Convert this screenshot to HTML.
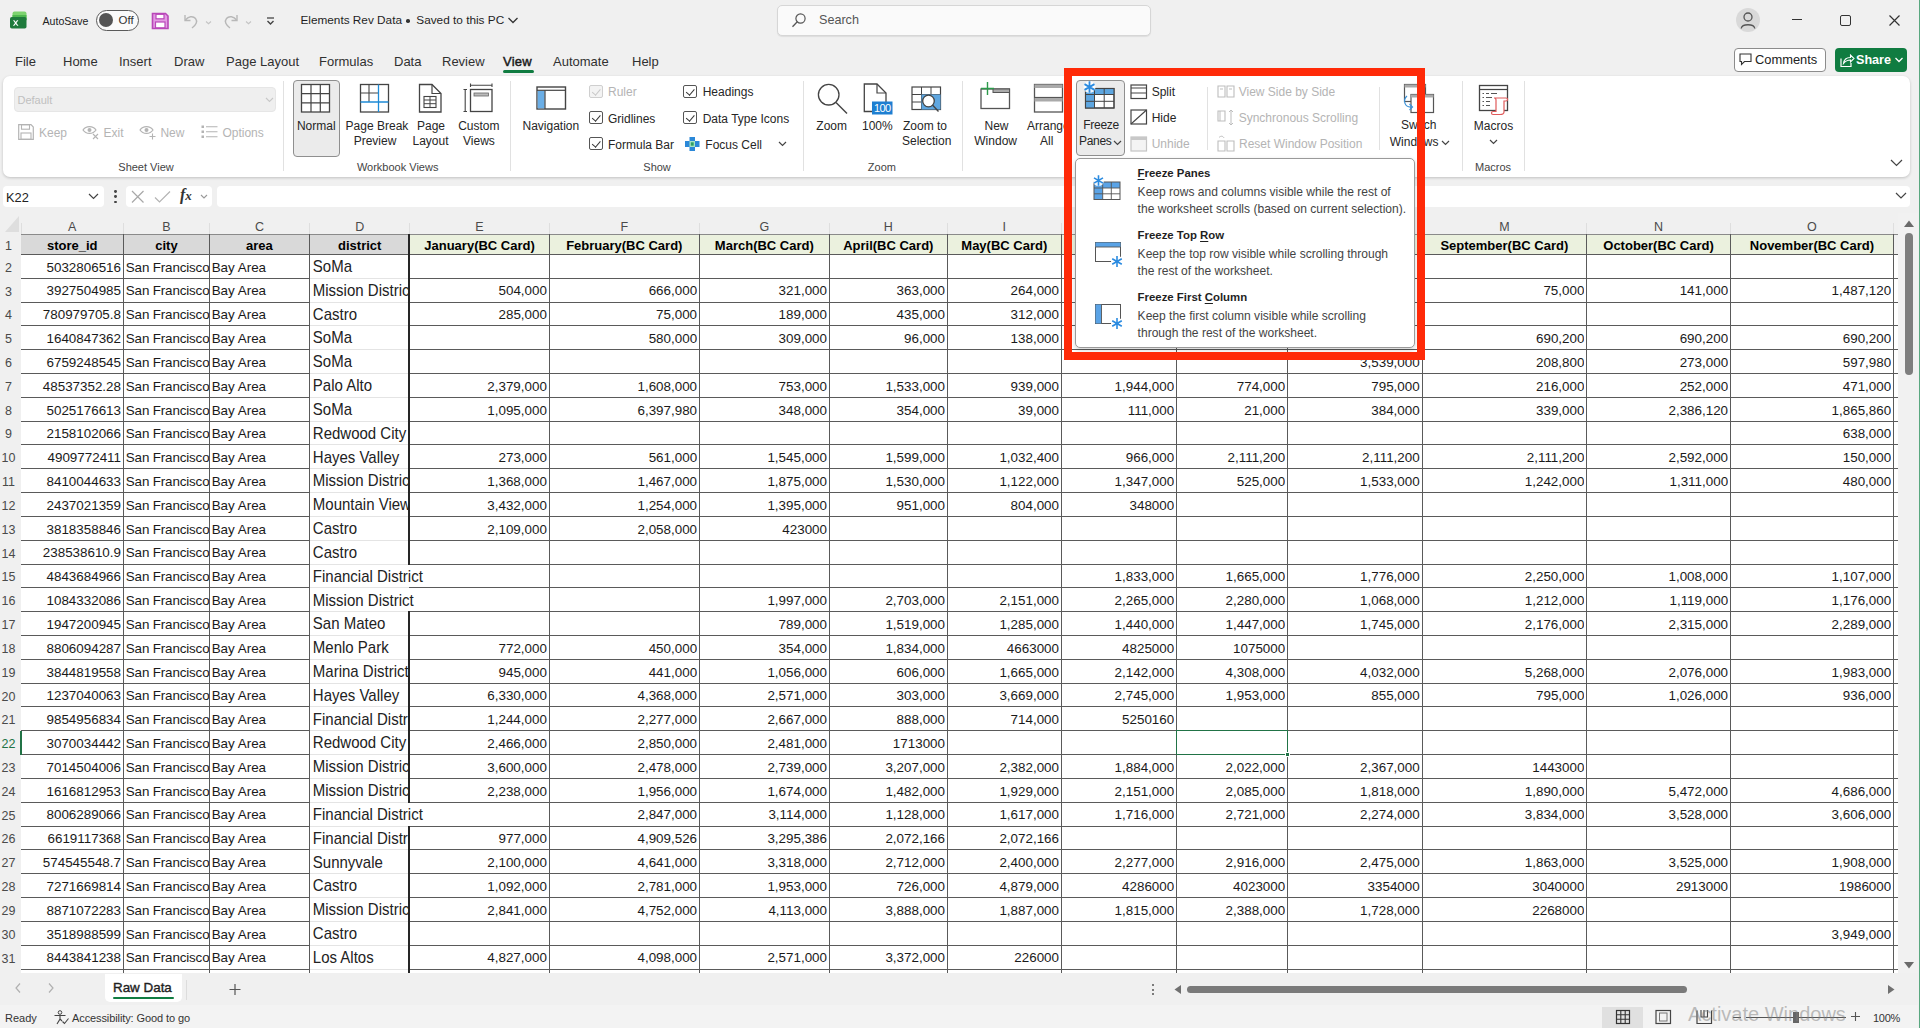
<!DOCTYPE html><html><head><meta charset="utf-8"><style>
*{margin:0;padding:0;box-sizing:border-box}
html,body{width:1920px;height:1028px;overflow:hidden;background:#f0f0f0;font-family:"Liberation Sans", sans-serif;color:#262626}
.a{position:absolute}
.c{position:absolute;white-space:nowrap;overflow:hidden;color:#1a1a1a;line-height:1}
.rn{position:absolute;left:0;width:17px;text-align:center;font-size:12.5px;color:#4a4a4a;line-height:1}
.ch{position:absolute;top:220.5px;text-align:center;font-size:12.5px;color:#4a4a4a;line-height:1}
.t12{font-size:12px;line-height:1;white-space:nowrap}
.mt{top:54.6px;font-size:13px;line-height:1;color:#303030;white-space:nowrap}
.rb{position:absolute;font-size:12px;line-height:1;white-space:nowrap;color:#262626}
.gl{position:absolute;font-size:11px;line-height:1;white-space:nowrap;color:#444;top:162px}
.dis{color:#b4b4b4}
.pt{position:absolute;left:1137.6px;font-size:11.4px;font-weight:bold;line-height:1;color:#1f1f1f;white-space:nowrap}
.pt u{text-decoration-thickness:1px;text-underline-offset:1.5px}
.pd{position:absolute;left:1137.6px;font-size:12.05px;line-height:1;color:#444;white-space:nowrap}
.cb{width:13.5px;height:13px;border:1px solid #555;border-radius:2px;background:#fff}
.cb::after{content:'';position:absolute;left:3.5px;top:1.2px;width:3.5px;height:6.5px;border-right:1.2px solid #333;border-bottom:1.2px solid #333;transform:rotate(40deg)}
.dcb{border-color:#cfcfcf;background:#f3f3f3}
.dcb::after{border-color:#c8c8c8}
</style></head><body>
<div style="position:absolute;left:21px;top:234.5px;width:388.9px;height:19.900000000000006px;background:#d9d9d9"></div>
<div style="position:absolute;left:409.9px;top:234.5px;width:1483.6px;height:19.900000000000006px;background:#ebf1de"></div>
<div style="position:absolute;left:21px;top:254.4px;width:1877px;height:718.6px;background:#fff"></div>
<div style="position:absolute;left:21px;top:234px;width:1877px;height:1px;background:#8a8a8a"></div>
<div style="position:absolute;left:21px;top:254px;width:288px;height:1px;background:#5a5a5a"></div>
<div style="position:absolute;left:309px;top:254px;width:100px;height:1px;background:#5a5a5a"></div>
<div style="position:absolute;left:409px;top:254px;width:1489px;height:1px;background:#5a5a5a"></div>
<div style="position:absolute;left:21px;top:278px;width:288px;height:1px;background:#5a5a5a"></div>
<div style="position:absolute;left:309px;top:278px;width:100px;height:1px;background:#e4e4e4"></div>
<div style="position:absolute;left:409px;top:278px;width:1489px;height:1px;background:#5a5a5a"></div>
<div style="position:absolute;left:21px;top:302px;width:288px;height:1px;background:#5a5a5a"></div>
<div style="position:absolute;left:309px;top:302px;width:100px;height:1px;background:#e4e4e4"></div>
<div style="position:absolute;left:409px;top:302px;width:1489px;height:1px;background:#5a5a5a"></div>
<div style="position:absolute;left:21px;top:325px;width:288px;height:1px;background:#5a5a5a"></div>
<div style="position:absolute;left:309px;top:325px;width:100px;height:1px;background:#e4e4e4"></div>
<div style="position:absolute;left:409px;top:325px;width:1489px;height:1px;background:#5a5a5a"></div>
<div style="position:absolute;left:21px;top:349px;width:288px;height:1px;background:#5a5a5a"></div>
<div style="position:absolute;left:309px;top:349px;width:100px;height:1px;background:#e4e4e4"></div>
<div style="position:absolute;left:409px;top:349px;width:1489px;height:1px;background:#5a5a5a"></div>
<div style="position:absolute;left:21px;top:373px;width:288px;height:1px;background:#5a5a5a"></div>
<div style="position:absolute;left:309px;top:373px;width:100px;height:1px;background:#e4e4e4"></div>
<div style="position:absolute;left:409px;top:373px;width:1489px;height:1px;background:#5a5a5a"></div>
<div style="position:absolute;left:21px;top:397px;width:288px;height:1px;background:#5a5a5a"></div>
<div style="position:absolute;left:309px;top:397px;width:100px;height:1px;background:#e4e4e4"></div>
<div style="position:absolute;left:409px;top:397px;width:1489px;height:1px;background:#5a5a5a"></div>
<div style="position:absolute;left:21px;top:421px;width:288px;height:1px;background:#5a5a5a"></div>
<div style="position:absolute;left:309px;top:421px;width:100px;height:1px;background:#e4e4e4"></div>
<div style="position:absolute;left:409px;top:421px;width:1489px;height:1px;background:#5a5a5a"></div>
<div style="position:absolute;left:21px;top:444px;width:288px;height:1px;background:#5a5a5a"></div>
<div style="position:absolute;left:309px;top:444px;width:100px;height:1px;background:#e4e4e4"></div>
<div style="position:absolute;left:409px;top:444px;width:1489px;height:1px;background:#5a5a5a"></div>
<div style="position:absolute;left:21px;top:468px;width:288px;height:1px;background:#5a5a5a"></div>
<div style="position:absolute;left:309px;top:468px;width:100px;height:1px;background:#e4e4e4"></div>
<div style="position:absolute;left:409px;top:468px;width:1489px;height:1px;background:#5a5a5a"></div>
<div style="position:absolute;left:21px;top:492px;width:288px;height:1px;background:#5a5a5a"></div>
<div style="position:absolute;left:309px;top:492px;width:100px;height:1px;background:#e4e4e4"></div>
<div style="position:absolute;left:409px;top:492px;width:1489px;height:1px;background:#5a5a5a"></div>
<div style="position:absolute;left:21px;top:516px;width:288px;height:1px;background:#5a5a5a"></div>
<div style="position:absolute;left:309px;top:516px;width:100px;height:1px;background:#e4e4e4"></div>
<div style="position:absolute;left:409px;top:516px;width:1489px;height:1px;background:#5a5a5a"></div>
<div style="position:absolute;left:21px;top:540px;width:288px;height:1px;background:#5a5a5a"></div>
<div style="position:absolute;left:309px;top:540px;width:100px;height:1px;background:#e4e4e4"></div>
<div style="position:absolute;left:409px;top:540px;width:1489px;height:1px;background:#5a5a5a"></div>
<div style="position:absolute;left:21px;top:564px;width:288px;height:1px;background:#5a5a5a"></div>
<div style="position:absolute;left:309px;top:564px;width:100px;height:1px;background:#e4e4e4"></div>
<div style="position:absolute;left:409px;top:564px;width:1489px;height:1px;background:#5a5a5a"></div>
<div style="position:absolute;left:21px;top:587px;width:288px;height:1px;background:#5a5a5a"></div>
<div style="position:absolute;left:309px;top:587px;width:100px;height:1px;background:#e4e4e4"></div>
<div style="position:absolute;left:409px;top:587px;width:1489px;height:1px;background:#5a5a5a"></div>
<div style="position:absolute;left:21px;top:611px;width:288px;height:1px;background:#5a5a5a"></div>
<div style="position:absolute;left:309px;top:611px;width:100px;height:1px;background:#e4e4e4"></div>
<div style="position:absolute;left:409px;top:611px;width:1489px;height:1px;background:#5a5a5a"></div>
<div style="position:absolute;left:21px;top:635px;width:288px;height:1px;background:#5a5a5a"></div>
<div style="position:absolute;left:309px;top:635px;width:100px;height:1px;background:#e4e4e4"></div>
<div style="position:absolute;left:409px;top:635px;width:1489px;height:1px;background:#5a5a5a"></div>
<div style="position:absolute;left:21px;top:659px;width:288px;height:1px;background:#5a5a5a"></div>
<div style="position:absolute;left:309px;top:659px;width:100px;height:1px;background:#e4e4e4"></div>
<div style="position:absolute;left:409px;top:659px;width:1489px;height:1px;background:#5a5a5a"></div>
<div style="position:absolute;left:21px;top:683px;width:288px;height:1px;background:#5a5a5a"></div>
<div style="position:absolute;left:309px;top:683px;width:100px;height:1px;background:#e4e4e4"></div>
<div style="position:absolute;left:409px;top:683px;width:1489px;height:1px;background:#5a5a5a"></div>
<div style="position:absolute;left:21px;top:706px;width:288px;height:1px;background:#5a5a5a"></div>
<div style="position:absolute;left:309px;top:706px;width:100px;height:1px;background:#e4e4e4"></div>
<div style="position:absolute;left:409px;top:706px;width:1489px;height:1px;background:#5a5a5a"></div>
<div style="position:absolute;left:21px;top:730px;width:288px;height:1px;background:#5a5a5a"></div>
<div style="position:absolute;left:309px;top:730px;width:100px;height:1px;background:#e4e4e4"></div>
<div style="position:absolute;left:409px;top:730px;width:1489px;height:1px;background:#5a5a5a"></div>
<div style="position:absolute;left:21px;top:754px;width:288px;height:1px;background:#5a5a5a"></div>
<div style="position:absolute;left:309px;top:754px;width:100px;height:1px;background:#e4e4e4"></div>
<div style="position:absolute;left:409px;top:754px;width:1489px;height:1px;background:#5a5a5a"></div>
<div style="position:absolute;left:21px;top:778px;width:288px;height:1px;background:#5a5a5a"></div>
<div style="position:absolute;left:309px;top:778px;width:100px;height:1px;background:#e4e4e4"></div>
<div style="position:absolute;left:409px;top:778px;width:1489px;height:1px;background:#5a5a5a"></div>
<div style="position:absolute;left:21px;top:802px;width:288px;height:1px;background:#5a5a5a"></div>
<div style="position:absolute;left:309px;top:802px;width:100px;height:1px;background:#e4e4e4"></div>
<div style="position:absolute;left:409px;top:802px;width:1489px;height:1px;background:#5a5a5a"></div>
<div style="position:absolute;left:21px;top:826px;width:288px;height:1px;background:#5a5a5a"></div>
<div style="position:absolute;left:309px;top:826px;width:100px;height:1px;background:#e4e4e4"></div>
<div style="position:absolute;left:409px;top:826px;width:1489px;height:1px;background:#5a5a5a"></div>
<div style="position:absolute;left:21px;top:849px;width:288px;height:1px;background:#5a5a5a"></div>
<div style="position:absolute;left:309px;top:849px;width:100px;height:1px;background:#e4e4e4"></div>
<div style="position:absolute;left:409px;top:849px;width:1489px;height:1px;background:#5a5a5a"></div>
<div style="position:absolute;left:21px;top:873px;width:288px;height:1px;background:#5a5a5a"></div>
<div style="position:absolute;left:309px;top:873px;width:100px;height:1px;background:#e4e4e4"></div>
<div style="position:absolute;left:409px;top:873px;width:1489px;height:1px;background:#5a5a5a"></div>
<div style="position:absolute;left:21px;top:897px;width:288px;height:1px;background:#5a5a5a"></div>
<div style="position:absolute;left:309px;top:897px;width:100px;height:1px;background:#e4e4e4"></div>
<div style="position:absolute;left:409px;top:897px;width:1489px;height:1px;background:#5a5a5a"></div>
<div style="position:absolute;left:21px;top:921px;width:288px;height:1px;background:#5a5a5a"></div>
<div style="position:absolute;left:309px;top:921px;width:100px;height:1px;background:#e4e4e4"></div>
<div style="position:absolute;left:409px;top:921px;width:1489px;height:1px;background:#5a5a5a"></div>
<div style="position:absolute;left:21px;top:945px;width:288px;height:1px;background:#5a5a5a"></div>
<div style="position:absolute;left:309px;top:945px;width:100px;height:1px;background:#e4e4e4"></div>
<div style="position:absolute;left:409px;top:945px;width:1489px;height:1px;background:#5a5a5a"></div>
<div style="position:absolute;left:21px;top:969px;width:288px;height:1px;background:#5a5a5a"></div>
<div style="position:absolute;left:309px;top:969px;width:100px;height:1px;background:#e4e4e4"></div>
<div style="position:absolute;left:409px;top:969px;width:1489px;height:1px;background:#5a5a5a"></div>
<div style="position:absolute;left:123px;top:234px;width:1px;height:739px;background:#5a5a5a"></div>
<div style="position:absolute;left:209px;top:234px;width:1px;height:739px;background:#5a5a5a"></div>
<div style="position:absolute;left:309px;top:234px;width:1px;height:739px;background:#5a5a5a"></div>
<div style="position:absolute;left:408px;top:234px;width:2px;height:331px;background:#262626"></div>
<div style="position:absolute;left:408px;top:611px;width:2px;height:192px;background:#262626"></div>
<div style="position:absolute;left:408px;top:826px;width:2px;height:147px;background:#262626"></div>
<div style="position:absolute;left:549px;top:234px;width:1px;height:739px;background:#5a5a5a"></div>
<div style="position:absolute;left:699px;top:234px;width:1px;height:739px;background:#5a5a5a"></div>
<div style="position:absolute;left:829px;top:234px;width:1px;height:739px;background:#5a5a5a"></div>
<div style="position:absolute;left:947px;top:234px;width:1px;height:739px;background:#5a5a5a"></div>
<div style="position:absolute;left:1061px;top:234px;width:1px;height:739px;background:#5a5a5a"></div>
<div style="position:absolute;left:1176px;top:234px;width:1px;height:739px;background:#5a5a5a"></div>
<div style="position:absolute;left:1287px;top:234px;width:1px;height:739px;background:#5a5a5a"></div>
<div style="position:absolute;left:1422px;top:234px;width:1px;height:739px;background:#5a5a5a"></div>
<div style="position:absolute;left:1586px;top:234px;width:1px;height:739px;background:#5a5a5a"></div>
<div style="position:absolute;left:1730px;top:234px;width:1px;height:739px;background:#5a5a5a"></div>
<div style="position:absolute;left:1893px;top:234px;width:1px;height:739px;background:#5a5a5a"></div>
<div class="c" style="left:21.0px;top:238.90px;width:102.5px;height:16.2px;font-size:13px;text-align:center;font-weight:bold;color:#000">store_id</div>
<div class="c" style="left:123.5px;top:238.90px;width:85.9px;height:16.2px;font-size:13px;text-align:center;font-weight:bold;color:#000">city</div>
<div class="c" style="left:209.4px;top:238.90px;width:100.1px;height:16.2px;font-size:13px;text-align:center;font-weight:bold;color:#000">area</div>
<div class="c" style="left:309.5px;top:238.90px;width:100.4px;height:16.2px;font-size:13px;text-align:center;font-weight:bold;color:#000">district</div>
<div class="c" style="left:409.9px;top:238.90px;width:139.3px;height:16.2px;font-size:13px;text-align:center;font-weight:bold;color:#000">January(BC Card)</div>
<div class="c" style="left:549.2px;top:238.90px;width:150.2px;height:16.2px;font-size:13px;text-align:center;font-weight:bold;color:#000">February(BC Card)</div>
<div class="c" style="left:699.4px;top:238.90px;width:129.9px;height:16.2px;font-size:13px;text-align:center;font-weight:bold;color:#000">March(BC Card)</div>
<div class="c" style="left:829.3px;top:238.90px;width:118.0px;height:16.2px;font-size:13px;text-align:center;font-weight:bold;color:#000">April(BC Card)</div>
<div class="c" style="left:947.3px;top:238.90px;width:114.0px;height:16.2px;font-size:13px;text-align:center;font-weight:bold;color:#000">May(BC Card)</div>
<div class="c" style="left:1422.0px;top:238.90px;width:164.7px;height:16.2px;font-size:13px;text-align:center;font-weight:bold;color:#000">September(BC Card)</div>
<div class="c" style="left:1586.7px;top:238.90px;width:143.7px;height:16.2px;font-size:13px;text-align:center;font-weight:bold;color:#000">October(BC Card)</div>
<div class="c" style="left:1730.4px;top:238.90px;width:163.1px;height:16.2px;font-size:13px;text-align:center;font-weight:bold;color:#000">November(BC Card)</div>
<div class="c" style="left:21.0px;top:260.58px;width:100.0px;height:16.8px;font-size:13.4px;text-align:right;">5032806516</div>
<div class="c" style="left:125.8px;top:260.58px;width:83.6px;height:16.8px;font-size:13.4px;text-align:left;letter-spacing:-0.15px">San Francisco</div>
<div class="c" style="left:211.7px;top:260.58px;width:97.8px;height:16.8px;font-size:13.4px;text-align:left;">Bay Area</div>
<div class="c" style="left:312.8px;top:259.02px;width:96.4px;height:18.8px;font-size:15px;text-align:left;transform:scaleY(1.12);transform-origin:0 80%;color:#222">SoMa</div>
<div class="c" style="left:21.0px;top:284.40px;width:100.0px;height:16.8px;font-size:13.4px;text-align:right;">3927504985</div>
<div class="c" style="left:125.8px;top:284.40px;width:83.6px;height:16.8px;font-size:13.4px;text-align:left;letter-spacing:-0.15px">San Francisco</div>
<div class="c" style="left:211.7px;top:284.40px;width:97.8px;height:16.8px;font-size:13.4px;text-align:left;">Bay Area</div>
<div class="c" style="left:312.8px;top:282.84px;width:96.4px;height:18.8px;font-size:15px;text-align:left;transform:scaleY(1.12);transform-origin:0 80%;color:#222">Mission District</div>
<div class="c" style="left:409.9px;top:284.40px;width:137.0px;height:16.8px;font-size:13.4px;text-align:right;">504,000</div>
<div class="c" style="left:549.2px;top:284.40px;width:147.9px;height:16.8px;font-size:13.4px;text-align:right;">666,000</div>
<div class="c" style="left:699.4px;top:284.40px;width:127.6px;height:16.8px;font-size:13.4px;text-align:right;">321,000</div>
<div class="c" style="left:829.3px;top:284.40px;width:115.7px;height:16.8px;font-size:13.4px;text-align:right;">363,000</div>
<div class="c" style="left:947.3px;top:284.40px;width:111.7px;height:16.8px;font-size:13.4px;text-align:right;">264,000</div>
<div class="c" style="left:1422.0px;top:284.40px;width:162.4px;height:16.8px;font-size:13.4px;text-align:right;">75,000</div>
<div class="c" style="left:1586.7px;top:284.40px;width:141.4px;height:16.8px;font-size:13.4px;text-align:right;">141,000</div>
<div class="c" style="left:1730.4px;top:284.40px;width:160.8px;height:16.8px;font-size:13.4px;text-align:right;">1,487,120</div>
<div class="c" style="left:21.0px;top:308.22px;width:100.0px;height:16.8px;font-size:13.4px;text-align:right;">780979705.8</div>
<div class="c" style="left:125.8px;top:308.22px;width:83.6px;height:16.8px;font-size:13.4px;text-align:left;letter-spacing:-0.15px">San Francisco</div>
<div class="c" style="left:211.7px;top:308.22px;width:97.8px;height:16.8px;font-size:13.4px;text-align:left;">Bay Area</div>
<div class="c" style="left:312.8px;top:306.66px;width:96.4px;height:18.8px;font-size:15px;text-align:left;transform:scaleY(1.12);transform-origin:0 80%;color:#222">Castro</div>
<div class="c" style="left:409.9px;top:308.22px;width:137.0px;height:16.8px;font-size:13.4px;text-align:right;">285,000</div>
<div class="c" style="left:549.2px;top:308.22px;width:147.9px;height:16.8px;font-size:13.4px;text-align:right;">75,000</div>
<div class="c" style="left:699.4px;top:308.22px;width:127.6px;height:16.8px;font-size:13.4px;text-align:right;">189,000</div>
<div class="c" style="left:829.3px;top:308.22px;width:115.7px;height:16.8px;font-size:13.4px;text-align:right;">435,000</div>
<div class="c" style="left:947.3px;top:308.22px;width:111.7px;height:16.8px;font-size:13.4px;text-align:right;">312,000</div>
<div class="c" style="left:21.0px;top:332.04px;width:100.0px;height:16.8px;font-size:13.4px;text-align:right;">1640847362</div>
<div class="c" style="left:125.8px;top:332.04px;width:83.6px;height:16.8px;font-size:13.4px;text-align:left;letter-spacing:-0.15px">San Francisco</div>
<div class="c" style="left:211.7px;top:332.04px;width:97.8px;height:16.8px;font-size:13.4px;text-align:left;">Bay Area</div>
<div class="c" style="left:312.8px;top:330.48px;width:96.4px;height:18.8px;font-size:15px;text-align:left;transform:scaleY(1.12);transform-origin:0 80%;color:#222">SoMa</div>
<div class="c" style="left:549.2px;top:332.04px;width:147.9px;height:16.8px;font-size:13.4px;text-align:right;">580,000</div>
<div class="c" style="left:699.4px;top:332.04px;width:127.6px;height:16.8px;font-size:13.4px;text-align:right;">309,000</div>
<div class="c" style="left:829.3px;top:332.04px;width:115.7px;height:16.8px;font-size:13.4px;text-align:right;">96,000</div>
<div class="c" style="left:947.3px;top:332.04px;width:111.7px;height:16.8px;font-size:13.4px;text-align:right;">138,000</div>
<div class="c" style="left:1422.0px;top:332.04px;width:162.4px;height:16.8px;font-size:13.4px;text-align:right;">690,200</div>
<div class="c" style="left:1586.7px;top:332.04px;width:141.4px;height:16.8px;font-size:13.4px;text-align:right;">690,200</div>
<div class="c" style="left:1730.4px;top:332.04px;width:160.8px;height:16.8px;font-size:13.4px;text-align:right;">690,200</div>
<div class="c" style="left:21.0px;top:355.86px;width:100.0px;height:16.8px;font-size:13.4px;text-align:right;">6759248545</div>
<div class="c" style="left:125.8px;top:355.86px;width:83.6px;height:16.8px;font-size:13.4px;text-align:left;letter-spacing:-0.15px">San Francisco</div>
<div class="c" style="left:211.7px;top:355.86px;width:97.8px;height:16.8px;font-size:13.4px;text-align:left;">Bay Area</div>
<div class="c" style="left:312.8px;top:354.30px;width:96.4px;height:18.8px;font-size:15px;text-align:left;transform:scaleY(1.12);transform-origin:0 80%;color:#222">SoMa</div>
<div class="c" style="left:1287.5px;top:355.86px;width:132.2px;height:16.8px;font-size:13.4px;text-align:right;">3,539,000</div>
<div class="c" style="left:1422.0px;top:355.86px;width:162.4px;height:16.8px;font-size:13.4px;text-align:right;">208,800</div>
<div class="c" style="left:1586.7px;top:355.86px;width:141.4px;height:16.8px;font-size:13.4px;text-align:right;">273,000</div>
<div class="c" style="left:1730.4px;top:355.86px;width:160.8px;height:16.8px;font-size:13.4px;text-align:right;">597,980</div>
<div class="c" style="left:21.0px;top:379.68px;width:100.0px;height:16.8px;font-size:13.4px;text-align:right;">48537352.28</div>
<div class="c" style="left:125.8px;top:379.68px;width:83.6px;height:16.8px;font-size:13.4px;text-align:left;letter-spacing:-0.15px">San Francisco</div>
<div class="c" style="left:211.7px;top:379.68px;width:97.8px;height:16.8px;font-size:13.4px;text-align:left;">Bay Area</div>
<div class="c" style="left:312.8px;top:378.12px;width:96.4px;height:18.8px;font-size:15px;text-align:left;transform:scaleY(1.12);transform-origin:0 80%;color:#222">Palo Alto</div>
<div class="c" style="left:409.9px;top:379.68px;width:137.0px;height:16.8px;font-size:13.4px;text-align:right;">2,379,000</div>
<div class="c" style="left:549.2px;top:379.68px;width:147.9px;height:16.8px;font-size:13.4px;text-align:right;">1,608,000</div>
<div class="c" style="left:699.4px;top:379.68px;width:127.6px;height:16.8px;font-size:13.4px;text-align:right;">753,000</div>
<div class="c" style="left:829.3px;top:379.68px;width:115.7px;height:16.8px;font-size:13.4px;text-align:right;">1,533,000</div>
<div class="c" style="left:947.3px;top:379.68px;width:111.7px;height:16.8px;font-size:13.4px;text-align:right;">939,000</div>
<div class="c" style="left:1061.3px;top:379.68px;width:112.9px;height:16.8px;font-size:13.4px;text-align:right;">1,944,000</div>
<div class="c" style="left:1176.5px;top:379.68px;width:108.7px;height:16.8px;font-size:13.4px;text-align:right;">774,000</div>
<div class="c" style="left:1287.5px;top:379.68px;width:132.2px;height:16.8px;font-size:13.4px;text-align:right;">795,000</div>
<div class="c" style="left:1422.0px;top:379.68px;width:162.4px;height:16.8px;font-size:13.4px;text-align:right;">216,000</div>
<div class="c" style="left:1586.7px;top:379.68px;width:141.4px;height:16.8px;font-size:13.4px;text-align:right;">252,000</div>
<div class="c" style="left:1730.4px;top:379.68px;width:160.8px;height:16.8px;font-size:13.4px;text-align:right;">471,000</div>
<div class="c" style="left:21.0px;top:403.50px;width:100.0px;height:16.8px;font-size:13.4px;text-align:right;">5025176613</div>
<div class="c" style="left:125.8px;top:403.50px;width:83.6px;height:16.8px;font-size:13.4px;text-align:left;letter-spacing:-0.15px">San Francisco</div>
<div class="c" style="left:211.7px;top:403.50px;width:97.8px;height:16.8px;font-size:13.4px;text-align:left;">Bay Area</div>
<div class="c" style="left:312.8px;top:401.94px;width:96.4px;height:18.8px;font-size:15px;text-align:left;transform:scaleY(1.12);transform-origin:0 80%;color:#222">SoMa</div>
<div class="c" style="left:409.9px;top:403.50px;width:137.0px;height:16.8px;font-size:13.4px;text-align:right;">1,095,000</div>
<div class="c" style="left:549.2px;top:403.50px;width:147.9px;height:16.8px;font-size:13.4px;text-align:right;">6,397,980</div>
<div class="c" style="left:699.4px;top:403.50px;width:127.6px;height:16.8px;font-size:13.4px;text-align:right;">348,000</div>
<div class="c" style="left:829.3px;top:403.50px;width:115.7px;height:16.8px;font-size:13.4px;text-align:right;">354,000</div>
<div class="c" style="left:947.3px;top:403.50px;width:111.7px;height:16.8px;font-size:13.4px;text-align:right;">39,000</div>
<div class="c" style="left:1061.3px;top:403.50px;width:112.9px;height:16.8px;font-size:13.4px;text-align:right;">111,000</div>
<div class="c" style="left:1176.5px;top:403.50px;width:108.7px;height:16.8px;font-size:13.4px;text-align:right;">21,000</div>
<div class="c" style="left:1287.5px;top:403.50px;width:132.2px;height:16.8px;font-size:13.4px;text-align:right;">384,000</div>
<div class="c" style="left:1422.0px;top:403.50px;width:162.4px;height:16.8px;font-size:13.4px;text-align:right;">339,000</div>
<div class="c" style="left:1586.7px;top:403.50px;width:141.4px;height:16.8px;font-size:13.4px;text-align:right;">2,386,120</div>
<div class="c" style="left:1730.4px;top:403.50px;width:160.8px;height:16.8px;font-size:13.4px;text-align:right;">1,865,860</div>
<div class="c" style="left:21.0px;top:427.32px;width:100.0px;height:16.8px;font-size:13.4px;text-align:right;">2158102066</div>
<div class="c" style="left:125.8px;top:427.32px;width:83.6px;height:16.8px;font-size:13.4px;text-align:left;letter-spacing:-0.15px">San Francisco</div>
<div class="c" style="left:211.7px;top:427.32px;width:97.8px;height:16.8px;font-size:13.4px;text-align:left;">Bay Area</div>
<div class="c" style="left:312.8px;top:425.76px;width:96.4px;height:18.8px;font-size:15px;text-align:left;transform:scaleY(1.12);transform-origin:0 80%;color:#222">Redwood City</div>
<div class="c" style="left:1730.4px;top:427.32px;width:160.8px;height:16.8px;font-size:13.4px;text-align:right;">638,000</div>
<div class="c" style="left:21.0px;top:451.14px;width:100.0px;height:16.8px;font-size:13.4px;text-align:right;">4909772411</div>
<div class="c" style="left:125.8px;top:451.14px;width:83.6px;height:16.8px;font-size:13.4px;text-align:left;letter-spacing:-0.15px">San Francisco</div>
<div class="c" style="left:211.7px;top:451.14px;width:97.8px;height:16.8px;font-size:13.4px;text-align:left;">Bay Area</div>
<div class="c" style="left:312.8px;top:449.58px;width:96.4px;height:18.8px;font-size:15px;text-align:left;transform:scaleY(1.12);transform-origin:0 80%;color:#222">Hayes Valley</div>
<div class="c" style="left:409.9px;top:451.14px;width:137.0px;height:16.8px;font-size:13.4px;text-align:right;">273,000</div>
<div class="c" style="left:549.2px;top:451.14px;width:147.9px;height:16.8px;font-size:13.4px;text-align:right;">561,000</div>
<div class="c" style="left:699.4px;top:451.14px;width:127.6px;height:16.8px;font-size:13.4px;text-align:right;">1,545,000</div>
<div class="c" style="left:829.3px;top:451.14px;width:115.7px;height:16.8px;font-size:13.4px;text-align:right;">1,599,000</div>
<div class="c" style="left:947.3px;top:451.14px;width:111.7px;height:16.8px;font-size:13.4px;text-align:right;">1,032,400</div>
<div class="c" style="left:1061.3px;top:451.14px;width:112.9px;height:16.8px;font-size:13.4px;text-align:right;">966,000</div>
<div class="c" style="left:1176.5px;top:451.14px;width:108.7px;height:16.8px;font-size:13.4px;text-align:right;">2,111,200</div>
<div class="c" style="left:1287.5px;top:451.14px;width:132.2px;height:16.8px;font-size:13.4px;text-align:right;">2,111,200</div>
<div class="c" style="left:1422.0px;top:451.14px;width:162.4px;height:16.8px;font-size:13.4px;text-align:right;">2,111,200</div>
<div class="c" style="left:1586.7px;top:451.14px;width:141.4px;height:16.8px;font-size:13.4px;text-align:right;">2,592,000</div>
<div class="c" style="left:1730.4px;top:451.14px;width:160.8px;height:16.8px;font-size:13.4px;text-align:right;">150,000</div>
<div class="c" style="left:21.0px;top:474.96px;width:100.0px;height:16.8px;font-size:13.4px;text-align:right;">8410044633</div>
<div class="c" style="left:125.8px;top:474.96px;width:83.6px;height:16.8px;font-size:13.4px;text-align:left;letter-spacing:-0.15px">San Francisco</div>
<div class="c" style="left:211.7px;top:474.96px;width:97.8px;height:16.8px;font-size:13.4px;text-align:left;">Bay Area</div>
<div class="c" style="left:312.8px;top:473.40px;width:96.4px;height:18.8px;font-size:15px;text-align:left;transform:scaleY(1.12);transform-origin:0 80%;color:#222">Mission District</div>
<div class="c" style="left:409.9px;top:474.96px;width:137.0px;height:16.8px;font-size:13.4px;text-align:right;">1,368,000</div>
<div class="c" style="left:549.2px;top:474.96px;width:147.9px;height:16.8px;font-size:13.4px;text-align:right;">1,467,000</div>
<div class="c" style="left:699.4px;top:474.96px;width:127.6px;height:16.8px;font-size:13.4px;text-align:right;">1,875,000</div>
<div class="c" style="left:829.3px;top:474.96px;width:115.7px;height:16.8px;font-size:13.4px;text-align:right;">1,530,000</div>
<div class="c" style="left:947.3px;top:474.96px;width:111.7px;height:16.8px;font-size:13.4px;text-align:right;">1,122,000</div>
<div class="c" style="left:1061.3px;top:474.96px;width:112.9px;height:16.8px;font-size:13.4px;text-align:right;">1,347,000</div>
<div class="c" style="left:1176.5px;top:474.96px;width:108.7px;height:16.8px;font-size:13.4px;text-align:right;">525,000</div>
<div class="c" style="left:1287.5px;top:474.96px;width:132.2px;height:16.8px;font-size:13.4px;text-align:right;">1,533,000</div>
<div class="c" style="left:1422.0px;top:474.96px;width:162.4px;height:16.8px;font-size:13.4px;text-align:right;">1,242,000</div>
<div class="c" style="left:1586.7px;top:474.96px;width:141.4px;height:16.8px;font-size:13.4px;text-align:right;">1,311,000</div>
<div class="c" style="left:1730.4px;top:474.96px;width:160.8px;height:16.8px;font-size:13.4px;text-align:right;">480,000</div>
<div class="c" style="left:21.0px;top:498.78px;width:100.0px;height:16.8px;font-size:13.4px;text-align:right;">2437021359</div>
<div class="c" style="left:125.8px;top:498.78px;width:83.6px;height:16.8px;font-size:13.4px;text-align:left;letter-spacing:-0.15px">San Francisco</div>
<div class="c" style="left:211.7px;top:498.78px;width:97.8px;height:16.8px;font-size:13.4px;text-align:left;">Bay Area</div>
<div class="c" style="left:312.8px;top:497.22px;width:96.4px;height:18.8px;font-size:15px;text-align:left;transform:scaleY(1.12);transform-origin:0 80%;color:#222">Mountain View</div>
<div class="c" style="left:409.9px;top:498.78px;width:137.0px;height:16.8px;font-size:13.4px;text-align:right;">3,432,000</div>
<div class="c" style="left:549.2px;top:498.78px;width:147.9px;height:16.8px;font-size:13.4px;text-align:right;">1,254,000</div>
<div class="c" style="left:699.4px;top:498.78px;width:127.6px;height:16.8px;font-size:13.4px;text-align:right;">1,395,000</div>
<div class="c" style="left:829.3px;top:498.78px;width:115.7px;height:16.8px;font-size:13.4px;text-align:right;">951,000</div>
<div class="c" style="left:947.3px;top:498.78px;width:111.7px;height:16.8px;font-size:13.4px;text-align:right;">804,000</div>
<div class="c" style="left:1061.3px;top:498.78px;width:112.9px;height:16.8px;font-size:13.4px;text-align:right;">348000</div>
<div class="c" style="left:21.0px;top:522.60px;width:100.0px;height:16.8px;font-size:13.4px;text-align:right;">3818358846</div>
<div class="c" style="left:125.8px;top:522.60px;width:83.6px;height:16.8px;font-size:13.4px;text-align:left;letter-spacing:-0.15px">San Francisco</div>
<div class="c" style="left:211.7px;top:522.60px;width:97.8px;height:16.8px;font-size:13.4px;text-align:left;">Bay Area</div>
<div class="c" style="left:312.8px;top:521.04px;width:96.4px;height:18.8px;font-size:15px;text-align:left;transform:scaleY(1.12);transform-origin:0 80%;color:#222">Castro</div>
<div class="c" style="left:409.9px;top:522.60px;width:137.0px;height:16.8px;font-size:13.4px;text-align:right;">2,109,000</div>
<div class="c" style="left:549.2px;top:522.60px;width:147.9px;height:16.8px;font-size:13.4px;text-align:right;">2,058,000</div>
<div class="c" style="left:699.4px;top:522.60px;width:127.6px;height:16.8px;font-size:13.4px;text-align:right;">423000</div>
<div class="c" style="left:21.0px;top:546.42px;width:100.0px;height:16.8px;font-size:13.4px;text-align:right;">238538610.9</div>
<div class="c" style="left:125.8px;top:546.42px;width:83.6px;height:16.8px;font-size:13.4px;text-align:left;letter-spacing:-0.15px">San Francisco</div>
<div class="c" style="left:211.7px;top:546.42px;width:97.8px;height:16.8px;font-size:13.4px;text-align:left;">Bay Area</div>
<div class="c" style="left:312.8px;top:544.86px;width:96.4px;height:18.8px;font-size:15px;text-align:left;transform:scaleY(1.12);transform-origin:0 80%;color:#222">Castro</div>
<div class="c" style="left:21.0px;top:570.24px;width:100.0px;height:16.8px;font-size:13.4px;text-align:right;">4843684966</div>
<div class="c" style="left:125.8px;top:570.24px;width:83.6px;height:16.8px;font-size:13.4px;text-align:left;letter-spacing:-0.15px">San Francisco</div>
<div class="c" style="left:211.7px;top:570.24px;width:97.8px;height:16.8px;font-size:13.4px;text-align:left;">Bay Area</div>
<div class="c" style="left:312.8px;top:568.68px;width:240.0px;height:18.8px;font-size:15px;text-align:left;transform:scaleY(1.12);transform-origin:0 80%;color:#222">Financial District</div>
<div class="c" style="left:1061.3px;top:570.24px;width:112.9px;height:16.8px;font-size:13.4px;text-align:right;">1,833,000</div>
<div class="c" style="left:1176.5px;top:570.24px;width:108.7px;height:16.8px;font-size:13.4px;text-align:right;">1,665,000</div>
<div class="c" style="left:1287.5px;top:570.24px;width:132.2px;height:16.8px;font-size:13.4px;text-align:right;">1,776,000</div>
<div class="c" style="left:1422.0px;top:570.24px;width:162.4px;height:16.8px;font-size:13.4px;text-align:right;">2,250,000</div>
<div class="c" style="left:1586.7px;top:570.24px;width:141.4px;height:16.8px;font-size:13.4px;text-align:right;">1,008,000</div>
<div class="c" style="left:1730.4px;top:570.24px;width:160.8px;height:16.8px;font-size:13.4px;text-align:right;">1,107,000</div>
<div class="c" style="left:21.0px;top:594.06px;width:100.0px;height:16.8px;font-size:13.4px;text-align:right;">1084332086</div>
<div class="c" style="left:125.8px;top:594.06px;width:83.6px;height:16.8px;font-size:13.4px;text-align:left;letter-spacing:-0.15px">San Francisco</div>
<div class="c" style="left:211.7px;top:594.06px;width:97.8px;height:16.8px;font-size:13.4px;text-align:left;">Bay Area</div>
<div class="c" style="left:312.8px;top:592.50px;width:240.0px;height:18.8px;font-size:15px;text-align:left;transform:scaleY(1.12);transform-origin:0 80%;color:#222">Mission District</div>
<div class="c" style="left:699.4px;top:594.06px;width:127.6px;height:16.8px;font-size:13.4px;text-align:right;">1,997,000</div>
<div class="c" style="left:829.3px;top:594.06px;width:115.7px;height:16.8px;font-size:13.4px;text-align:right;">2,703,000</div>
<div class="c" style="left:947.3px;top:594.06px;width:111.7px;height:16.8px;font-size:13.4px;text-align:right;">2,151,000</div>
<div class="c" style="left:1061.3px;top:594.06px;width:112.9px;height:16.8px;font-size:13.4px;text-align:right;">2,265,000</div>
<div class="c" style="left:1176.5px;top:594.06px;width:108.7px;height:16.8px;font-size:13.4px;text-align:right;">2,280,000</div>
<div class="c" style="left:1287.5px;top:594.06px;width:132.2px;height:16.8px;font-size:13.4px;text-align:right;">1,068,000</div>
<div class="c" style="left:1422.0px;top:594.06px;width:162.4px;height:16.8px;font-size:13.4px;text-align:right;">1,212,000</div>
<div class="c" style="left:1586.7px;top:594.06px;width:141.4px;height:16.8px;font-size:13.4px;text-align:right;">1,119,000</div>
<div class="c" style="left:1730.4px;top:594.06px;width:160.8px;height:16.8px;font-size:13.4px;text-align:right;">1,176,000</div>
<div class="c" style="left:21.0px;top:617.88px;width:100.0px;height:16.8px;font-size:13.4px;text-align:right;">1947200945</div>
<div class="c" style="left:125.8px;top:617.88px;width:83.6px;height:16.8px;font-size:13.4px;text-align:left;letter-spacing:-0.15px">San Francisco</div>
<div class="c" style="left:211.7px;top:617.88px;width:97.8px;height:16.8px;font-size:13.4px;text-align:left;">Bay Area</div>
<div class="c" style="left:312.8px;top:616.32px;width:96.4px;height:18.8px;font-size:15px;text-align:left;transform:scaleY(1.12);transform-origin:0 80%;color:#222">San Mateo</div>
<div class="c" style="left:699.4px;top:617.88px;width:127.6px;height:16.8px;font-size:13.4px;text-align:right;">789,000</div>
<div class="c" style="left:829.3px;top:617.88px;width:115.7px;height:16.8px;font-size:13.4px;text-align:right;">1,519,000</div>
<div class="c" style="left:947.3px;top:617.88px;width:111.7px;height:16.8px;font-size:13.4px;text-align:right;">1,285,000</div>
<div class="c" style="left:1061.3px;top:617.88px;width:112.9px;height:16.8px;font-size:13.4px;text-align:right;">1,440,000</div>
<div class="c" style="left:1176.5px;top:617.88px;width:108.7px;height:16.8px;font-size:13.4px;text-align:right;">1,447,000</div>
<div class="c" style="left:1287.5px;top:617.88px;width:132.2px;height:16.8px;font-size:13.4px;text-align:right;">1,745,000</div>
<div class="c" style="left:1422.0px;top:617.88px;width:162.4px;height:16.8px;font-size:13.4px;text-align:right;">2,176,000</div>
<div class="c" style="left:1586.7px;top:617.88px;width:141.4px;height:16.8px;font-size:13.4px;text-align:right;">2,315,000</div>
<div class="c" style="left:1730.4px;top:617.88px;width:160.8px;height:16.8px;font-size:13.4px;text-align:right;">2,289,000</div>
<div class="c" style="left:21.0px;top:641.70px;width:100.0px;height:16.8px;font-size:13.4px;text-align:right;">8806094287</div>
<div class="c" style="left:125.8px;top:641.70px;width:83.6px;height:16.8px;font-size:13.4px;text-align:left;letter-spacing:-0.15px">San Francisco</div>
<div class="c" style="left:211.7px;top:641.70px;width:97.8px;height:16.8px;font-size:13.4px;text-align:left;">Bay Area</div>
<div class="c" style="left:312.8px;top:640.14px;width:96.4px;height:18.8px;font-size:15px;text-align:left;transform:scaleY(1.12);transform-origin:0 80%;color:#222">Menlo Park</div>
<div class="c" style="left:409.9px;top:641.70px;width:137.0px;height:16.8px;font-size:13.4px;text-align:right;">772,000</div>
<div class="c" style="left:549.2px;top:641.70px;width:147.9px;height:16.8px;font-size:13.4px;text-align:right;">450,000</div>
<div class="c" style="left:699.4px;top:641.70px;width:127.6px;height:16.8px;font-size:13.4px;text-align:right;">354,000</div>
<div class="c" style="left:829.3px;top:641.70px;width:115.7px;height:16.8px;font-size:13.4px;text-align:right;">1,834,000</div>
<div class="c" style="left:947.3px;top:641.70px;width:111.7px;height:16.8px;font-size:13.4px;text-align:right;">4663000</div>
<div class="c" style="left:1061.3px;top:641.70px;width:112.9px;height:16.8px;font-size:13.4px;text-align:right;">4825000</div>
<div class="c" style="left:1176.5px;top:641.70px;width:108.7px;height:16.8px;font-size:13.4px;text-align:right;">1075000</div>
<div class="c" style="left:21.0px;top:665.52px;width:100.0px;height:16.8px;font-size:13.4px;text-align:right;">3844819558</div>
<div class="c" style="left:125.8px;top:665.52px;width:83.6px;height:16.8px;font-size:13.4px;text-align:left;letter-spacing:-0.15px">San Francisco</div>
<div class="c" style="left:211.7px;top:665.52px;width:97.8px;height:16.8px;font-size:13.4px;text-align:left;">Bay Area</div>
<div class="c" style="left:312.8px;top:663.96px;width:96.4px;height:18.8px;font-size:15px;text-align:left;transform:scaleY(1.12);transform-origin:0 80%;color:#222">Marina District</div>
<div class="c" style="left:409.9px;top:665.52px;width:137.0px;height:16.8px;font-size:13.4px;text-align:right;">945,000</div>
<div class="c" style="left:549.2px;top:665.52px;width:147.9px;height:16.8px;font-size:13.4px;text-align:right;">441,000</div>
<div class="c" style="left:699.4px;top:665.52px;width:127.6px;height:16.8px;font-size:13.4px;text-align:right;">1,056,000</div>
<div class="c" style="left:829.3px;top:665.52px;width:115.7px;height:16.8px;font-size:13.4px;text-align:right;">606,000</div>
<div class="c" style="left:947.3px;top:665.52px;width:111.7px;height:16.8px;font-size:13.4px;text-align:right;">1,665,000</div>
<div class="c" style="left:1061.3px;top:665.52px;width:112.9px;height:16.8px;font-size:13.4px;text-align:right;">2,142,000</div>
<div class="c" style="left:1176.5px;top:665.52px;width:108.7px;height:16.8px;font-size:13.4px;text-align:right;">4,308,000</div>
<div class="c" style="left:1287.5px;top:665.52px;width:132.2px;height:16.8px;font-size:13.4px;text-align:right;">4,032,000</div>
<div class="c" style="left:1422.0px;top:665.52px;width:162.4px;height:16.8px;font-size:13.4px;text-align:right;">5,268,000</div>
<div class="c" style="left:1586.7px;top:665.52px;width:141.4px;height:16.8px;font-size:13.4px;text-align:right;">2,076,000</div>
<div class="c" style="left:1730.4px;top:665.52px;width:160.8px;height:16.8px;font-size:13.4px;text-align:right;">1,983,000</div>
<div class="c" style="left:21.0px;top:689.34px;width:100.0px;height:16.8px;font-size:13.4px;text-align:right;">1237040063</div>
<div class="c" style="left:125.8px;top:689.34px;width:83.6px;height:16.8px;font-size:13.4px;text-align:left;letter-spacing:-0.15px">San Francisco</div>
<div class="c" style="left:211.7px;top:689.34px;width:97.8px;height:16.8px;font-size:13.4px;text-align:left;">Bay Area</div>
<div class="c" style="left:312.8px;top:687.78px;width:96.4px;height:18.8px;font-size:15px;text-align:left;transform:scaleY(1.12);transform-origin:0 80%;color:#222">Hayes Valley</div>
<div class="c" style="left:409.9px;top:689.34px;width:137.0px;height:16.8px;font-size:13.4px;text-align:right;">6,330,000</div>
<div class="c" style="left:549.2px;top:689.34px;width:147.9px;height:16.8px;font-size:13.4px;text-align:right;">4,368,000</div>
<div class="c" style="left:699.4px;top:689.34px;width:127.6px;height:16.8px;font-size:13.4px;text-align:right;">2,571,000</div>
<div class="c" style="left:829.3px;top:689.34px;width:115.7px;height:16.8px;font-size:13.4px;text-align:right;">303,000</div>
<div class="c" style="left:947.3px;top:689.34px;width:111.7px;height:16.8px;font-size:13.4px;text-align:right;">3,669,000</div>
<div class="c" style="left:1061.3px;top:689.34px;width:112.9px;height:16.8px;font-size:13.4px;text-align:right;">2,745,000</div>
<div class="c" style="left:1176.5px;top:689.34px;width:108.7px;height:16.8px;font-size:13.4px;text-align:right;">1,953,000</div>
<div class="c" style="left:1287.5px;top:689.34px;width:132.2px;height:16.8px;font-size:13.4px;text-align:right;">855,000</div>
<div class="c" style="left:1422.0px;top:689.34px;width:162.4px;height:16.8px;font-size:13.4px;text-align:right;">795,000</div>
<div class="c" style="left:1586.7px;top:689.34px;width:141.4px;height:16.8px;font-size:13.4px;text-align:right;">1,026,000</div>
<div class="c" style="left:1730.4px;top:689.34px;width:160.8px;height:16.8px;font-size:13.4px;text-align:right;">936,000</div>
<div class="c" style="left:21.0px;top:713.16px;width:100.0px;height:16.8px;font-size:13.4px;text-align:right;">9854956834</div>
<div class="c" style="left:125.8px;top:713.16px;width:83.6px;height:16.8px;font-size:13.4px;text-align:left;letter-spacing:-0.15px">San Francisco</div>
<div class="c" style="left:211.7px;top:713.16px;width:97.8px;height:16.8px;font-size:13.4px;text-align:left;">Bay Area</div>
<div class="c" style="left:312.8px;top:711.60px;width:96.4px;height:18.8px;font-size:15px;text-align:left;transform:scaleY(1.12);transform-origin:0 80%;color:#222">Financial District</div>
<div class="c" style="left:409.9px;top:713.16px;width:137.0px;height:16.8px;font-size:13.4px;text-align:right;">1,244,000</div>
<div class="c" style="left:549.2px;top:713.16px;width:147.9px;height:16.8px;font-size:13.4px;text-align:right;">2,277,000</div>
<div class="c" style="left:699.4px;top:713.16px;width:127.6px;height:16.8px;font-size:13.4px;text-align:right;">2,667,000</div>
<div class="c" style="left:829.3px;top:713.16px;width:115.7px;height:16.8px;font-size:13.4px;text-align:right;">888,000</div>
<div class="c" style="left:947.3px;top:713.16px;width:111.7px;height:16.8px;font-size:13.4px;text-align:right;">714,000</div>
<div class="c" style="left:1061.3px;top:713.16px;width:112.9px;height:16.8px;font-size:13.4px;text-align:right;">5250160</div>
<div class="c" style="left:21.0px;top:736.98px;width:100.0px;height:16.8px;font-size:13.4px;text-align:right;">3070034442</div>
<div class="c" style="left:125.8px;top:736.98px;width:83.6px;height:16.8px;font-size:13.4px;text-align:left;letter-spacing:-0.15px">San Francisco</div>
<div class="c" style="left:211.7px;top:736.98px;width:97.8px;height:16.8px;font-size:13.4px;text-align:left;">Bay Area</div>
<div class="c" style="left:312.8px;top:735.42px;width:96.4px;height:18.8px;font-size:15px;text-align:left;transform:scaleY(1.12);transform-origin:0 80%;color:#222">Redwood City</div>
<div class="c" style="left:409.9px;top:736.98px;width:137.0px;height:16.8px;font-size:13.4px;text-align:right;">2,466,000</div>
<div class="c" style="left:549.2px;top:736.98px;width:147.9px;height:16.8px;font-size:13.4px;text-align:right;">2,850,000</div>
<div class="c" style="left:699.4px;top:736.98px;width:127.6px;height:16.8px;font-size:13.4px;text-align:right;">2,481,000</div>
<div class="c" style="left:829.3px;top:736.98px;width:115.7px;height:16.8px;font-size:13.4px;text-align:right;">1713000</div>
<div class="c" style="left:21.0px;top:760.80px;width:100.0px;height:16.8px;font-size:13.4px;text-align:right;">7014504006</div>
<div class="c" style="left:125.8px;top:760.80px;width:83.6px;height:16.8px;font-size:13.4px;text-align:left;letter-spacing:-0.15px">San Francisco</div>
<div class="c" style="left:211.7px;top:760.80px;width:97.8px;height:16.8px;font-size:13.4px;text-align:left;">Bay Area</div>
<div class="c" style="left:312.8px;top:759.24px;width:96.4px;height:18.8px;font-size:15px;text-align:left;transform:scaleY(1.12);transform-origin:0 80%;color:#222">Mission District</div>
<div class="c" style="left:409.9px;top:760.80px;width:137.0px;height:16.8px;font-size:13.4px;text-align:right;">3,600,000</div>
<div class="c" style="left:549.2px;top:760.80px;width:147.9px;height:16.8px;font-size:13.4px;text-align:right;">2,478,000</div>
<div class="c" style="left:699.4px;top:760.80px;width:127.6px;height:16.8px;font-size:13.4px;text-align:right;">2,739,000</div>
<div class="c" style="left:829.3px;top:760.80px;width:115.7px;height:16.8px;font-size:13.4px;text-align:right;">3,207,000</div>
<div class="c" style="left:947.3px;top:760.80px;width:111.7px;height:16.8px;font-size:13.4px;text-align:right;">2,382,000</div>
<div class="c" style="left:1061.3px;top:760.80px;width:112.9px;height:16.8px;font-size:13.4px;text-align:right;">1,884,000</div>
<div class="c" style="left:1176.5px;top:760.80px;width:108.7px;height:16.8px;font-size:13.4px;text-align:right;">2,022,000</div>
<div class="c" style="left:1287.5px;top:760.80px;width:132.2px;height:16.8px;font-size:13.4px;text-align:right;">2,367,000</div>
<div class="c" style="left:1422.0px;top:760.80px;width:162.4px;height:16.8px;font-size:13.4px;text-align:right;">1443000</div>
<div class="c" style="left:21.0px;top:784.62px;width:100.0px;height:16.8px;font-size:13.4px;text-align:right;">1616812953</div>
<div class="c" style="left:125.8px;top:784.62px;width:83.6px;height:16.8px;font-size:13.4px;text-align:left;letter-spacing:-0.15px">San Francisco</div>
<div class="c" style="left:211.7px;top:784.62px;width:97.8px;height:16.8px;font-size:13.4px;text-align:left;">Bay Area</div>
<div class="c" style="left:312.8px;top:783.06px;width:96.4px;height:18.8px;font-size:15px;text-align:left;transform:scaleY(1.12);transform-origin:0 80%;color:#222">Mission District</div>
<div class="c" style="left:409.9px;top:784.62px;width:137.0px;height:16.8px;font-size:13.4px;text-align:right;">2,238,000</div>
<div class="c" style="left:549.2px;top:784.62px;width:147.9px;height:16.8px;font-size:13.4px;text-align:right;">1,956,000</div>
<div class="c" style="left:699.4px;top:784.62px;width:127.6px;height:16.8px;font-size:13.4px;text-align:right;">1,674,000</div>
<div class="c" style="left:829.3px;top:784.62px;width:115.7px;height:16.8px;font-size:13.4px;text-align:right;">1,482,000</div>
<div class="c" style="left:947.3px;top:784.62px;width:111.7px;height:16.8px;font-size:13.4px;text-align:right;">1,929,000</div>
<div class="c" style="left:1061.3px;top:784.62px;width:112.9px;height:16.8px;font-size:13.4px;text-align:right;">2,151,000</div>
<div class="c" style="left:1176.5px;top:784.62px;width:108.7px;height:16.8px;font-size:13.4px;text-align:right;">2,085,000</div>
<div class="c" style="left:1287.5px;top:784.62px;width:132.2px;height:16.8px;font-size:13.4px;text-align:right;">1,818,000</div>
<div class="c" style="left:1422.0px;top:784.62px;width:162.4px;height:16.8px;font-size:13.4px;text-align:right;">1,890,000</div>
<div class="c" style="left:1586.7px;top:784.62px;width:141.4px;height:16.8px;font-size:13.4px;text-align:right;">5,472,000</div>
<div class="c" style="left:1730.4px;top:784.62px;width:160.8px;height:16.8px;font-size:13.4px;text-align:right;">4,686,000</div>
<div class="c" style="left:21.0px;top:808.44px;width:100.0px;height:16.8px;font-size:13.4px;text-align:right;">8006289066</div>
<div class="c" style="left:125.8px;top:808.44px;width:83.6px;height:16.8px;font-size:13.4px;text-align:left;letter-spacing:-0.15px">San Francisco</div>
<div class="c" style="left:211.7px;top:808.44px;width:97.8px;height:16.8px;font-size:13.4px;text-align:left;">Bay Area</div>
<div class="c" style="left:312.8px;top:806.88px;width:240.0px;height:18.8px;font-size:15px;text-align:left;transform:scaleY(1.12);transform-origin:0 80%;color:#222">Financial District</div>
<div class="c" style="left:549.2px;top:808.44px;width:147.9px;height:16.8px;font-size:13.4px;text-align:right;">2,847,000</div>
<div class="c" style="left:699.4px;top:808.44px;width:127.6px;height:16.8px;font-size:13.4px;text-align:right;">3,114,000</div>
<div class="c" style="left:829.3px;top:808.44px;width:115.7px;height:16.8px;font-size:13.4px;text-align:right;">1,128,000</div>
<div class="c" style="left:947.3px;top:808.44px;width:111.7px;height:16.8px;font-size:13.4px;text-align:right;">1,617,000</div>
<div class="c" style="left:1061.3px;top:808.44px;width:112.9px;height:16.8px;font-size:13.4px;text-align:right;">1,716,000</div>
<div class="c" style="left:1176.5px;top:808.44px;width:108.7px;height:16.8px;font-size:13.4px;text-align:right;">2,721,000</div>
<div class="c" style="left:1287.5px;top:808.44px;width:132.2px;height:16.8px;font-size:13.4px;text-align:right;">2,274,000</div>
<div class="c" style="left:1422.0px;top:808.44px;width:162.4px;height:16.8px;font-size:13.4px;text-align:right;">3,834,000</div>
<div class="c" style="left:1586.7px;top:808.44px;width:141.4px;height:16.8px;font-size:13.4px;text-align:right;">3,528,000</div>
<div class="c" style="left:1730.4px;top:808.44px;width:160.8px;height:16.8px;font-size:13.4px;text-align:right;">3,606,000</div>
<div class="c" style="left:21.0px;top:832.26px;width:100.0px;height:16.8px;font-size:13.4px;text-align:right;">6619117368</div>
<div class="c" style="left:125.8px;top:832.26px;width:83.6px;height:16.8px;font-size:13.4px;text-align:left;letter-spacing:-0.15px">San Francisco</div>
<div class="c" style="left:211.7px;top:832.26px;width:97.8px;height:16.8px;font-size:13.4px;text-align:left;">Bay Area</div>
<div class="c" style="left:312.8px;top:830.70px;width:96.4px;height:18.8px;font-size:15px;text-align:left;transform:scaleY(1.12);transform-origin:0 80%;color:#222">Financial District</div>
<div class="c" style="left:409.9px;top:832.26px;width:137.0px;height:16.8px;font-size:13.4px;text-align:right;">977,000</div>
<div class="c" style="left:549.2px;top:832.26px;width:147.9px;height:16.8px;font-size:13.4px;text-align:right;">4,909,526</div>
<div class="c" style="left:699.4px;top:832.26px;width:127.6px;height:16.8px;font-size:13.4px;text-align:right;">3,295,386</div>
<div class="c" style="left:829.3px;top:832.26px;width:115.7px;height:16.8px;font-size:13.4px;text-align:right;">2,072,166</div>
<div class="c" style="left:947.3px;top:832.26px;width:111.7px;height:16.8px;font-size:13.4px;text-align:right;">2,072,166</div>
<div class="c" style="left:21.0px;top:856.08px;width:100.0px;height:16.8px;font-size:13.4px;text-align:right;">574545548.7</div>
<div class="c" style="left:125.8px;top:856.08px;width:83.6px;height:16.8px;font-size:13.4px;text-align:left;letter-spacing:-0.15px">San Francisco</div>
<div class="c" style="left:211.7px;top:856.08px;width:97.8px;height:16.8px;font-size:13.4px;text-align:left;">Bay Area</div>
<div class="c" style="left:312.8px;top:854.52px;width:96.4px;height:18.8px;font-size:15px;text-align:left;transform:scaleY(1.12);transform-origin:0 80%;color:#222">Sunnyvale</div>
<div class="c" style="left:409.9px;top:856.08px;width:137.0px;height:16.8px;font-size:13.4px;text-align:right;">2,100,000</div>
<div class="c" style="left:549.2px;top:856.08px;width:147.9px;height:16.8px;font-size:13.4px;text-align:right;">4,641,000</div>
<div class="c" style="left:699.4px;top:856.08px;width:127.6px;height:16.8px;font-size:13.4px;text-align:right;">3,318,000</div>
<div class="c" style="left:829.3px;top:856.08px;width:115.7px;height:16.8px;font-size:13.4px;text-align:right;">2,712,000</div>
<div class="c" style="left:947.3px;top:856.08px;width:111.7px;height:16.8px;font-size:13.4px;text-align:right;">2,400,000</div>
<div class="c" style="left:1061.3px;top:856.08px;width:112.9px;height:16.8px;font-size:13.4px;text-align:right;">2,277,000</div>
<div class="c" style="left:1176.5px;top:856.08px;width:108.7px;height:16.8px;font-size:13.4px;text-align:right;">2,916,000</div>
<div class="c" style="left:1287.5px;top:856.08px;width:132.2px;height:16.8px;font-size:13.4px;text-align:right;">2,475,000</div>
<div class="c" style="left:1422.0px;top:856.08px;width:162.4px;height:16.8px;font-size:13.4px;text-align:right;">1,863,000</div>
<div class="c" style="left:1586.7px;top:856.08px;width:141.4px;height:16.8px;font-size:13.4px;text-align:right;">3,525,000</div>
<div class="c" style="left:1730.4px;top:856.08px;width:160.8px;height:16.8px;font-size:13.4px;text-align:right;">1,908,000</div>
<div class="c" style="left:21.0px;top:879.90px;width:100.0px;height:16.8px;font-size:13.4px;text-align:right;">7271669814</div>
<div class="c" style="left:125.8px;top:879.90px;width:83.6px;height:16.8px;font-size:13.4px;text-align:left;letter-spacing:-0.15px">San Francisco</div>
<div class="c" style="left:211.7px;top:879.90px;width:97.8px;height:16.8px;font-size:13.4px;text-align:left;">Bay Area</div>
<div class="c" style="left:312.8px;top:878.34px;width:96.4px;height:18.8px;font-size:15px;text-align:left;transform:scaleY(1.12);transform-origin:0 80%;color:#222">Castro</div>
<div class="c" style="left:409.9px;top:879.90px;width:137.0px;height:16.8px;font-size:13.4px;text-align:right;">1,092,000</div>
<div class="c" style="left:549.2px;top:879.90px;width:147.9px;height:16.8px;font-size:13.4px;text-align:right;">2,781,000</div>
<div class="c" style="left:699.4px;top:879.90px;width:127.6px;height:16.8px;font-size:13.4px;text-align:right;">1,953,000</div>
<div class="c" style="left:829.3px;top:879.90px;width:115.7px;height:16.8px;font-size:13.4px;text-align:right;">726,000</div>
<div class="c" style="left:947.3px;top:879.90px;width:111.7px;height:16.8px;font-size:13.4px;text-align:right;">4,879,000</div>
<div class="c" style="left:1061.3px;top:879.90px;width:112.9px;height:16.8px;font-size:13.4px;text-align:right;">4286000</div>
<div class="c" style="left:1176.5px;top:879.90px;width:108.7px;height:16.8px;font-size:13.4px;text-align:right;">4023000</div>
<div class="c" style="left:1287.5px;top:879.90px;width:132.2px;height:16.8px;font-size:13.4px;text-align:right;">3354000</div>
<div class="c" style="left:1422.0px;top:879.90px;width:162.4px;height:16.8px;font-size:13.4px;text-align:right;">3040000</div>
<div class="c" style="left:1586.7px;top:879.90px;width:141.4px;height:16.8px;font-size:13.4px;text-align:right;">2913000</div>
<div class="c" style="left:1730.4px;top:879.90px;width:160.8px;height:16.8px;font-size:13.4px;text-align:right;">1986000</div>
<div class="c" style="left:21.0px;top:903.72px;width:100.0px;height:16.8px;font-size:13.4px;text-align:right;">8871072283</div>
<div class="c" style="left:125.8px;top:903.72px;width:83.6px;height:16.8px;font-size:13.4px;text-align:left;letter-spacing:-0.15px">San Francisco</div>
<div class="c" style="left:211.7px;top:903.72px;width:97.8px;height:16.8px;font-size:13.4px;text-align:left;">Bay Area</div>
<div class="c" style="left:312.8px;top:902.16px;width:96.4px;height:18.8px;font-size:15px;text-align:left;transform:scaleY(1.12);transform-origin:0 80%;color:#222">Mission District</div>
<div class="c" style="left:409.9px;top:903.72px;width:137.0px;height:16.8px;font-size:13.4px;text-align:right;">2,841,000</div>
<div class="c" style="left:549.2px;top:903.72px;width:147.9px;height:16.8px;font-size:13.4px;text-align:right;">4,752,000</div>
<div class="c" style="left:699.4px;top:903.72px;width:127.6px;height:16.8px;font-size:13.4px;text-align:right;">4,113,000</div>
<div class="c" style="left:829.3px;top:903.72px;width:115.7px;height:16.8px;font-size:13.4px;text-align:right;">3,888,000</div>
<div class="c" style="left:947.3px;top:903.72px;width:111.7px;height:16.8px;font-size:13.4px;text-align:right;">1,887,000</div>
<div class="c" style="left:1061.3px;top:903.72px;width:112.9px;height:16.8px;font-size:13.4px;text-align:right;">1,815,000</div>
<div class="c" style="left:1176.5px;top:903.72px;width:108.7px;height:16.8px;font-size:13.4px;text-align:right;">2,388,000</div>
<div class="c" style="left:1287.5px;top:903.72px;width:132.2px;height:16.8px;font-size:13.4px;text-align:right;">1,728,000</div>
<div class="c" style="left:1422.0px;top:903.72px;width:162.4px;height:16.8px;font-size:13.4px;text-align:right;">2268000</div>
<div class="c" style="left:21.0px;top:927.54px;width:100.0px;height:16.8px;font-size:13.4px;text-align:right;">3518988599</div>
<div class="c" style="left:125.8px;top:927.54px;width:83.6px;height:16.8px;font-size:13.4px;text-align:left;letter-spacing:-0.15px">San Francisco</div>
<div class="c" style="left:211.7px;top:927.54px;width:97.8px;height:16.8px;font-size:13.4px;text-align:left;">Bay Area</div>
<div class="c" style="left:312.8px;top:925.98px;width:96.4px;height:18.8px;font-size:15px;text-align:left;transform:scaleY(1.12);transform-origin:0 80%;color:#222">Castro</div>
<div class="c" style="left:1730.4px;top:927.54px;width:160.8px;height:16.8px;font-size:13.4px;text-align:right;">3,949,000</div>
<div class="c" style="left:21.0px;top:951.36px;width:100.0px;height:16.8px;font-size:13.4px;text-align:right;">8443841238</div>
<div class="c" style="left:125.8px;top:951.36px;width:83.6px;height:16.8px;font-size:13.4px;text-align:left;letter-spacing:-0.15px">San Francisco</div>
<div class="c" style="left:211.7px;top:951.36px;width:97.8px;height:16.8px;font-size:13.4px;text-align:left;">Bay Area</div>
<div class="c" style="left:312.8px;top:949.80px;width:96.4px;height:18.8px;font-size:15px;text-align:left;transform:scaleY(1.12);transform-origin:0 80%;color:#222">Los Altos</div>
<div class="c" style="left:409.9px;top:951.36px;width:137.0px;height:16.8px;font-size:13.4px;text-align:right;">4,827,000</div>
<div class="c" style="left:549.2px;top:951.36px;width:147.9px;height:16.8px;font-size:13.4px;text-align:right;">4,098,000</div>
<div class="c" style="left:699.4px;top:951.36px;width:127.6px;height:16.8px;font-size:13.4px;text-align:right;">2,571,000</div>
<div class="c" style="left:829.3px;top:951.36px;width:115.7px;height:16.8px;font-size:13.4px;text-align:right;">3,372,000</div>
<div class="c" style="left:947.3px;top:951.36px;width:111.7px;height:16.8px;font-size:13.4px;text-align:right;">226000</div>
<div class="rn" style="top:239.8px;color:#4a4a4a">1</div>
<div class="rn" style="top:261.7px;color:#4a4a4a">2</div>
<div class="rn" style="top:285.5px;color:#4a4a4a">3</div>
<div class="rn" style="top:309.4px;color:#4a4a4a">4</div>
<div class="rn" style="top:333.2px;color:#4a4a4a">5</div>
<div class="rn" style="top:357.0px;color:#4a4a4a">6</div>
<div class="rn" style="top:380.8px;color:#4a4a4a">7</div>
<div class="rn" style="top:404.6px;color:#4a4a4a">8</div>
<div class="rn" style="top:428.4px;color:#4a4a4a">9</div>
<div class="rn" style="top:452.3px;color:#4a4a4a">10</div>
<div class="rn" style="top:476.1px;color:#4a4a4a">11</div>
<div class="rn" style="top:499.9px;color:#4a4a4a">12</div>
<div class="rn" style="top:523.7px;color:#4a4a4a">13</div>
<div class="rn" style="top:547.6px;color:#4a4a4a">14</div>
<div class="rn" style="top:571.4px;color:#4a4a4a">15</div>
<div class="rn" style="top:595.2px;color:#4a4a4a">16</div>
<div class="rn" style="top:619.0px;color:#4a4a4a">17</div>
<div class="rn" style="top:642.8px;color:#4a4a4a">18</div>
<div class="rn" style="top:666.6px;color:#4a4a4a">19</div>
<div class="rn" style="top:690.5px;color:#4a4a4a">20</div>
<div class="rn" style="top:714.3px;color:#4a4a4a">21</div>
<div class="rn" style="top:738.1px;color:#217346">22</div>
<div class="rn" style="top:761.9px;color:#4a4a4a">23</div>
<div class="rn" style="top:785.7px;color:#4a4a4a">24</div>
<div class="rn" style="top:809.6px;color:#4a4a4a">25</div>
<div class="rn" style="top:833.4px;color:#4a4a4a">26</div>
<div class="rn" style="top:857.2px;color:#4a4a4a">27</div>
<div class="rn" style="top:881.0px;color:#4a4a4a">28</div>
<div class="rn" style="top:904.9px;color:#4a4a4a">29</div>
<div class="rn" style="top:928.7px;color:#4a4a4a">30</div>
<div class="rn" style="top:952.5px;color:#4a4a4a">31</div>
<div class="ch" style="left:21px;width:102.5px">A</div>
<div class="ch" style="left:123.5px;width:85.9px">B</div>
<div class="ch" style="left:209.4px;width:100.1px">C</div>
<div class="ch" style="left:309.5px;width:100.39999999999998px">D</div>
<div class="ch" style="left:409.9px;width:139.30000000000007px">E</div>
<div class="ch" style="left:549.2px;width:150.19999999999993px">F</div>
<div class="ch" style="left:699.4px;width:129.89999999999998px">G</div>
<div class="ch" style="left:829.3px;width:118.0px">H</div>
<div class="ch" style="left:947.3px;width:114.0px">I</div>
<div class="ch" style="left:1061.3px;width:115.20000000000005px">J</div>
<div class="ch" style="left:1176.5px;width:111.0px">K</div>
<div class="ch" style="left:1287.5px;width:134.5px">L</div>
<div class="ch" style="left:1422px;width:164.70000000000005px">M</div>
<div class="ch" style="left:1586.7px;width:143.70000000000005px">N</div>
<div class="ch" style="left:1730.4px;width:163.0999999999999px">O</div>
<!-- ============ TITLE BAR ============ -->
<div class="a" style="left:0;top:0;width:1920px;height:76px;background:#f0f0f0"></div>
<!-- excel logo -->
<svg class="a" style="left:8px;top:10px" width="20" height="20" viewBox="0 0 20 20">
  <rect x="4.5" y="1.5" width="14" height="10" rx="2" fill="#7dd36f"/>
  <rect x="4.5" y="5" width="14" height="5" fill="#4fb84f"/>
  <rect x="2" y="7" width="16.5" height="11.5" rx="1.8" fill="#1e7b3c"/>
  <path d="M5 10.2 L7 13 L4.9 15.8 H6.3 L7.7 13.9 L9.1 15.8 H10.5 L8.4 13 L10.4 10.2 H9 L7.7 12.1 L6.4 10.2Z" fill="#fff"/>
</svg>
<div class="a t12" style="left:42.5px;top:15.5px;font-size:10.6px;color:#222">AutoSave</div>
<div class="a" style="left:96px;top:10px;width:43px;height:21px;border:1.4px solid #5a5a5a;border-radius:11px;background:#fafafa"></div>
<div class="a" style="left:99px;top:13px;width:14px;height:14px;border-radius:50%;background:#555"></div>
<div class="a t12" style="left:118.5px;top:14.5px;font-size:11.5px;color:#333">Off</div>
<!-- save icon -->
<svg class="a" style="left:151px;top:12px" width="19" height="18" viewBox="0 0 19 18">
  <path d="M1.5 1.5 H14.5 L17 4 V16.5 H1.5Z" fill="#e39be3" stroke="#b948b9" stroke-width="1.6"/>
  <rect x="5" y="2.3" width="8" height="4.5" fill="#fff" stroke="#b948b9" stroke-width="1.2"/>
  <rect x="4.5" y="10" width="9.5" height="5.8" fill="#fff" stroke="#b948b9" stroke-width="1.2"/>
</svg>
<!-- undo/redo -->
<svg class="a" style="left:180px;top:12px" width="100" height="18" viewBox="0 0 100 18">
  <path d="M5 3 V8.5 H10.5" fill="none" stroke="#b8b8b8" stroke-width="1.4"/>
  <path d="M5.5 8 C8 4.5 13 3.5 15.5 6.5 C18 9.5 16 13 12 16" fill="none" stroke="#b8b8b8" stroke-width="1.4"/>
  <path d="M26 9.5 l2.5 2.2 l2.5 -2.2" fill="none" stroke="#c4c4c4" stroke-width="1.1"/>
  <path d="M57 3 V8.5 H51.5" fill="none" stroke="#b8b8b8" stroke-width="1.4"/>
  <path d="M56.5 8 C54 4.5 49 3.5 46.5 6.5 C44 9.5 46 13 50 16" fill="none" stroke="#b8b8b8" stroke-width="1.4"/>
  <path d="M66 9.5 l2.5 2.2 l2.5 -2.2" fill="none" stroke="#c4c4c4" stroke-width="1.1"/>
  <path d="M87 6 H94" stroke="#444" stroke-width="1.3"/>
  <path d="M87.5 9 l3 3 l3 -3" fill="none" stroke="#444" stroke-width="1.4"/>
</svg>
<div class="a t12" style="left:300.4px;top:15.3px;font-size:11.8px;color:#1f1f1f">Elements Rev Data</div><div class="a" style="left:406px;top:19px;width:3.5px;height:3.5px;border-radius:50%;background:#333"></div><div class="a t12" style="left:416.3px;top:15.3px;font-size:11.8px;color:#1f1f1f">Saved to this PC</div>
<svg class="a" style="left:507px;top:15px" width="12" height="10" viewBox="0 0 12 10"><path d="M1.5 3 L6 7.5 L10.5 3" fill="none" stroke="#333" stroke-width="1.3"/></svg>
<!-- search -->
<div class="a" style="left:777px;top:5px;width:374px;height:31px;border:1px solid #d6d6d6;border-radius:5px;background:#fafafa;box-shadow:0 1px 1px rgba(0,0,0,0.08)"></div>
<svg class="a" style="left:790px;top:12px" width="18" height="18" viewBox="0 0 18 18"><circle cx="10.5" cy="6.5" r="4.6" fill="none" stroke="#555" stroke-width="1.2"/><path d="M7.3 9.8 L2.5 14.8" stroke="#555" stroke-width="1.3"/></svg>
<div class="a t12" style="left:819px;top:14px;font-size:12.6px;color:#555">Search</div>
<!-- profile & window controls -->
<div class="a" style="left:1736px;top:8px;width:24px;height:24px;border-radius:50%;background:#d9d9d9"></div>
<svg class="a" style="left:1736px;top:8px" width="24" height="24" viewBox="0 0 24 24"><circle cx="12" cy="9" r="4" fill="none" stroke="#555" stroke-width="1.3"/><path d="M5.2 20.5 C6 15.5 18 15.5 18.8 20.5" fill="none" stroke="#555" stroke-width="1.3"/></svg>
<div class="a" style="left:1792px;top:19px;width:10px;height:1.3px;background:#333"></div>
<div class="a" style="left:1840px;top:15px;width:11px;height:10.5px;border:1.3px solid #333;border-radius:2px"></div>
<svg class="a" style="left:1888px;top:14px" width="13" height="13" viewBox="0 0 13 13"><path d="M1.5 1.5 L11.5 11.5 M11.5 1.5 L1.5 11.5" stroke="#333" stroke-width="1.2"/></svg>
<div class="a" style="left:1918.5px;top:0;width:1.5px;height:1028px;background:#5aa880"></div>

<!-- ============ MENU TABS ============ -->
<div class="a mt" style="left:15px">File</div>
<div class="a mt" style="left:63px">Home</div>
<div class="a mt" style="left:119px">Insert</div>
<div class="a mt" style="left:174px">Draw</div>
<div class="a mt" style="left:226px">Page Layout</div>
<div class="a mt" style="left:319px">Formulas</div>
<div class="a mt" style="left:394px">Data</div>
<div class="a mt" style="left:442px">Review</div>
<div class="a mt" style="left:503px;color:#1a1a1a;-webkit-text-stroke:0.45px #1a1a1a;letter-spacing:0.2px">View</div>
<div class="a" style="left:503px;top:70px;width:31px;height:3px;border-radius:2px;background:#107c41"></div>
<div class="a mt" style="left:553px">Automate</div>
<div class="a mt" style="left:632px">Help</div>
<!-- comments / share -->
<div class="a" style="left:1734px;top:48px;width:92px;height:24px;border:1px solid #8c8c8c;border-radius:4px;background:#fff"></div>
<svg class="a" style="left:1739px;top:53px" width="13" height="13" viewBox="0 0 13 13"><path d="M1 1 H12 V8.5 H5.5 L2.5 11.5 V8.5 H1Z" fill="none" stroke="#333" stroke-width="1.1"/></svg>
<div class="a t12" style="left:1755px;top:54px;font-size:12.9px;color:#222">Comments</div>
<div class="a" style="left:1834.5px;top:48px;width:72px;height:24px;border-radius:4px;background:#107c41"></div>
<svg class="a" style="left:1839px;top:52px" width="16" height="16" viewBox="0 0 16 16"><path d="M2 6.5 V14.5 H12 V11" fill="none" stroke="#fff" stroke-width="1.2"/><path d="M4.5 11.5 C5 7.5 8 5.5 11.5 5.5 V3 L15 6.5 L11.5 10 V8 C8.5 8 6.5 9 4.5 11.5Z" fill="none" stroke="#fff" stroke-width="1.1"/></svg>
<div class="a t12" style="left:1856px;top:53.5px;font-size:12.6px;color:#fff;font-weight:bold">Share</div>
<svg class="a" style="left:1894px;top:56px" width="10" height="8" viewBox="0 0 10 8"><path d="M1.5 2 L5 5.5 L8.5 2" fill="none" stroke="#fff" stroke-width="1.3"/></svg>

<!-- ============ RIBBON ============ -->
<div class="a" style="left:3px;top:76px;width:1907px;height:100.5px;background:#fff;border-radius:7px;box-shadow:0 1px 3px rgba(0,0,0,0.2)"></div>

<!-- Sheet View group -->
<div class="a" style="left:14px;top:87px;width:262px;height:24.5px;background:#efefef;border:1px solid #e6e6e6;border-radius:4px"></div>
<div class="rb dis" style="left:17.5px;top:95px;font-size:11px;color:#c0c0c0">Default</div>
<svg class="a" style="left:265px;top:97px" width="9" height="6" viewBox="0 0 9 6"><path d="M1 1 L4.5 4.5 L8 1" fill="none" stroke="#c8c8c8" stroke-width="1.1"/></svg>
<svg class="a" style="left:18px;top:124px" width="16" height="16" viewBox="0 0 16 16"><path d="M0.7 0.7 H13 L15.3 3 V15.3 H0.7Z" fill="none" stroke="#b4b4b4" stroke-width="1.2"/><rect x="3.5" y="0.7" width="8" height="4.5" fill="none" stroke="#b4b4b4" stroke-width="1.1"/><rect x="3" y="9" width="10" height="6.3" fill="none" stroke="#b4b4b4" stroke-width="1.1"/></svg>
<div class="rb dis" style="left:39px;top:126.8px">Keep</div>
<svg class="a" style="left:82px;top:124px" width="18" height="16" viewBox="0 0 18 16"><path d="M1 6 C4 1.5 11 1.5 14 6 C11 10.5 4 10.5 1 6Z" fill="none" stroke="#b4b4b4" stroke-width="1.2"/><circle cx="7.5" cy="6" r="2" fill="#b4b4b4"/><path d="M11 10 L16 15 M16 10 L11 15" stroke="#b4b4b4" stroke-width="1.1"/></svg>
<div class="rb dis" style="left:103.5px;top:126.8px">Exit</div>
<svg class="a" style="left:139px;top:124px" width="18" height="16" viewBox="0 0 18 16"><path d="M1 6 C4 1.5 11 1.5 14 6 C11 10.5 4 10.5 1 6Z" fill="none" stroke="#b4b4b4" stroke-width="1.2"/><circle cx="7.5" cy="6" r="2" fill="#b4b4b4"/><path d="M13.5 9.5 V15.5 M10.5 12.5 H16.5" stroke="#b4b4b4" stroke-width="1.1"/></svg>
<div class="rb dis" style="left:160.4px;top:126.8px">New</div>
<svg class="a" style="left:201px;top:125px" width="17" height="14" viewBox="0 0 17 14"><rect x="0.5" y="0.5" width="2.5" height="2.5" fill="#b4b4b4"/><rect x="0.5" y="5.5" width="2.5" height="2.5" fill="#b4b4b4"/><rect x="0.5" y="10.5" width="2.5" height="2.5" fill="#b4b4b4"/><path d="M5 1.7 H16.5 M5 6.7 H16.5 M5 11.7 H16.5" stroke="#b4b4b4" stroke-width="1.1"/></svg>
<div class="rb dis" style="left:222.4px;top:126.8px">Options</div>
<div class="gl" style="left:118.3px">Sheet View</div>
<div class="a" style="left:283px;top:81px;width:1px;height:90px;background:#e1e1e1"></div>

<!-- Workbook Views -->
<div class="a" style="left:292.5px;top:79.5px;width:47px;height:77px;background:#ebebeb;border:1px solid #8f8f8f;border-radius:4px"></div>
<svg class="a" style="left:300px;top:83px" width="32" height="31" viewBox="0 0 32 31">
 <rect x="1.5" y="1.5" width="28" height="27.5" fill="#fff" stroke="#444" stroke-width="1.3"/>
 <path d="M11 1.5 V29 M20.3 1.5 V29 M1.5 10.7 H29.5 M1.5 19.8 H29.5" stroke="#444" stroke-width="1.2"/>
</svg>
<div class="rb" style="left:296.9px;top:119.8px">Normal</div>
<svg class="a" style="left:359px;top:83px" width="32" height="31" viewBox="0 0 32 31">
 <rect x="1.5" y="1.5" width="28" height="27.5" fill="#fff" stroke="#444" stroke-width="1.3"/>
 <path d="M10 1.5 V19 M1.5 10 H19" stroke="#444" stroke-width="1.1"/>
 <path d="M19.5 1.5 V29 M1.5 19 H29.5" stroke="#1e8bd6" stroke-width="1.3"/>
</svg>
<div class="rb" style="left:345.6px;top:119.8px">Page Break</div>
<div class="rb" style="left:353.7px;top:135.2px">Preview</div>
<svg class="a" style="left:418px;top:83px" width="25" height="31" viewBox="0 0 25 31">
 <path d="M1.5 1.5 H14 L23 10.5 V29 H1.5Z" fill="#fff" stroke="#444" stroke-width="1.3"/>
 <path d="M14 1.5 V10.5 H23" fill="none" stroke="#444" stroke-width="1.2"/>
 <rect x="6" y="13.5" width="12" height="11" fill="none" stroke="#444" stroke-width="1.1"/>
 <path d="M6 17 H18 M6 20.7 H18 M12 13.5 V24.5" stroke="#444" stroke-width="1"/>
</svg>
<div class="rb" style="left:417px;top:119.8px">Page</div>
<div class="rb" style="left:412.5px;top:135.2px">Layout</div>
<svg class="a" style="left:462px;top:82px" width="33" height="32" viewBox="0 0 33 32">
 <path d="M8.5 1.5 V5 M30 1.5 V5 M8.5 3.2 H30" stroke="#444" stroke-width="1.1"/>
 <path d="M1.5 7.5 H5 M1.5 29.5 H5 M3.2 7.5 V29.5" stroke="#444" stroke-width="1.1"/>
 <rect x="8.5" y="7.5" width="21.5" height="22" fill="#fff" stroke="#444" stroke-width="1.3"/>
 <rect x="12" y="11" width="14.5" height="3" fill="#bbb" stroke="#666" stroke-width="0.8"/>
</svg>
<div class="rb" style="left:458.2px;top:119.8px">Custom</div>
<div class="rb" style="left:463px;top:135.2px">Views</div>
<div class="gl" style="left:356.9px">Workbook Views</div>
<div class="a" style="left:510px;top:81px;width:1px;height:90px;background:#e1e1e1"></div>

<!-- Show -->
<svg class="a" style="left:536px;top:86px" width="31" height="25" viewBox="0 0 31 25">
 <rect x="1" y="1" width="28.5" height="22" fill="#fff" stroke="#444" stroke-width="1.4"/>
 <path d="M1 4.3 H29.5" stroke="#444" stroke-width="1.2"/>
 <rect x="1.7" y="5" width="7" height="17.3" fill="#6aaee6"/>
 <path d="M9 4.3 V23" stroke="#444" stroke-width="1.2"/>
</svg>
<div class="rb" style="left:522.5px;top:119.8px">Navigation</div>
<div class="a cb dcb" style="left:589px;top:85px"></div><div class="rb dis" style="left:608px;top:86.2px">Ruler</div>
<div class="a cb" style="left:589px;top:110.5px"></div><div class="rb" style="left:608px;top:112.7px">Gridlines</div>
<div class="a cb" style="left:589px;top:137px"></div><div class="rb" style="left:608px;top:138.5px">Formula Bar</div>
<div class="a cb" style="left:683px;top:85px"></div><div class="rb" style="left:702.7px;top:86.2px">Headings</div>
<div class="a cb" style="left:683px;top:110.5px"></div><div class="rb" style="left:702.7px;top:112.7px">Data Type Icons</div>
<svg class="a" style="left:684px;top:136px" width="17" height="16" viewBox="0 0 17 16">
 <path d="M5.5 1 H11 V5 H15.5 V11 H11 V15 H5.5 V11 H1 V5 H5.5Z" fill="#2b88d8"/>
 <rect x="5.5" y="5" width="5.5" height="6" fill="#a6e3c3"/>
 <path d="M6.8 6.3 H9.7 V9.7 H6.8Z" fill="#2f9e65"/>
</svg>
<div class="rb" style="left:705.3px;top:138.5px">Focus Cell</div>
<svg class="a" style="left:778px;top:141px" width="9" height="6" viewBox="0 0 9 6"><path d="M1 1 L4.5 4.5 L8 1" fill="none" stroke="#444" stroke-width="1.2"/></svg>
<div class="gl" style="left:643.3px">Show</div>
<div class="a" style="left:802.5px;top:81px;width:1px;height:90px;background:#e1e1e1"></div>

<!-- Zoom -->
<svg class="a" style="left:815px;top:82px" width="35" height="34" viewBox="0 0 35 34">
 <circle cx="13.7" cy="12.7" r="10.3" fill="#fff" stroke="#444" stroke-width="1.3"/>
 <path d="M21 20.5 L32 31.5" stroke="#444" stroke-width="1.4"/>
</svg>
<div class="rb" style="left:816.3px;top:119.5px">Zoom</div>
<svg class="a" style="left:862px;top:82px" width="32" height="34" viewBox="0 0 32 34">
 <path d="M2.3 2 H15 L24 11 V29.5 H2.3Z" fill="#fff" stroke="#444" stroke-width="1.3"/>
 <path d="M15 2 V11 H24" fill="none" stroke="#444" stroke-width="1.2"/>
 <rect x="10" y="19.5" width="20.5" height="13" fill="#1e7fd1"/>
 <text x="20.3" y="30.3" font-family="Liberation Sans" font-size="11" fill="#fff" text-anchor="middle" letter-spacing="-0.6">100</text>
</svg>
<div class="rb" style="left:862px;top:119.5px">100%</div>
<svg class="a" style="left:910px;top:85px" width="34" height="30" viewBox="0 0 34 30">
 <rect x="2" y="2" width="28.5" height="22.5" fill="#fff" stroke="#444" stroke-width="1.2"/>
 <path d="M2 9.5 H30.5 M2 17 H30.5 M11.5 2 V24.5 M21 2 V24.5" stroke="#444" stroke-width="1"/>
 <rect x="11.5" y="9.5" width="19" height="15" fill="#5ea6e0"/>
 <circle cx="18.5" cy="16" r="5.8" fill="#fff" stroke="#444" stroke-width="1.3"/>
 <path d="M22.5 20 L28.5 26.5" stroke="#444" stroke-width="1.4"/>
</svg>
<div class="rb" style="left:903px;top:119.5px">Zoom to</div>
<div class="rb" style="left:902px;top:135px">Selection</div>
<div class="gl" style="left:867.8px">Zoom</div>
<div class="a" style="left:961.5px;top:81px;width:1px;height:90px;background:#e1e1e1"></div>

<!-- Window -->
<svg class="a" style="left:977px;top:80px" width="36" height="32" viewBox="0 0 36 32">
 <rect x="4" y="9" width="28.5" height="19.5" fill="#fff" stroke="#555" stroke-width="1.3"/>
 <rect x="16" y="9" width="16.5" height="3.5" fill="#aaa" stroke="#555" stroke-width="1"/>
 <path d="M10.5 2 V15 M4 8.5 H17" stroke="#2c9a4b" stroke-width="1.4"/>
</svg>
<div class="rb" style="left:984.5px;top:119.5px">New</div>
<div class="rb" style="left:974.3px;top:135px">Window</div>
<svg class="a" style="left:1033px;top:83px" width="31" height="31" viewBox="0 0 31 31">
 <rect x="1.5" y="1.5" width="28" height="27.5" fill="#fff" stroke="#555" stroke-width="1.3"/>
 <rect x="1.5" y="1.5" width="28" height="3.5" fill="#aaa"/>
 <path d="M1.5 14.5 H29.5" stroke="#555" stroke-width="1.2"/>
 <rect x="1.5" y="15" width="28" height="3.5" fill="#aaa"/>
</svg>
<div class="rb" style="left:1027px;top:119.5px">Arrange</div>
<div class="rb" style="left:1040px;top:135px">All</div>

<div class="a" style="left:1075.8px;top:79.7px;width:49px;height:76.6px;background:#ebebeb;border:1px solid #8f8f8f;border-radius:4px"></div>
<svg class="a" style="left:1082px;top:80px" width="34" height="32" viewBox="0 0 34 32">
 <rect x="3.5" y="8.5" width="28.5" height="19.5" fill="#fff" stroke="#444" stroke-width="1.1"/>
 <rect x="3.5" y="8.5" width="28.5" height="6" fill="#5ea6e0"/>
 <rect x="3.5" y="8.5" width="9" height="19.5" fill="#5ea6e0"/>
 <path d="M3.5 14.5 H32 M3.5 21.3 H32 M12.5 8.5 V28 M22.2 8.5 V28" stroke="#444" stroke-width="1"/>
 <rect x="3.5" y="8.5" width="28.5" height="19.5" fill="none" stroke="#444" stroke-width="1.1"/>
 <circle cx="7.5" cy="7" r="6" fill="#fff" opacity="0.9"/><path d="M7.5 1.2 V12.8 M2.5 4.1 L12.5 9.9 M12.5 4.1 L2.5 9.9" stroke="#2b8be0" stroke-width="1.8"/>
</svg>
<div class="rb" style="left:1083.3px;top:118.8px;letter-spacing:-0.3px">Freeze</div>
<div class="rb" style="left:1079px;top:134.8px;letter-spacing:-0.3px">Panes</div>
<svg class="a" style="left:1113px;top:140px" width="9" height="6" viewBox="0 0 9 6"><path d="M1 1 L4.5 4.5 L8 1" fill="none" stroke="#444" stroke-width="1.2"/></svg>

<svg class="a" style="left:1130px;top:84px" width="18" height="16" viewBox="0 0 18 16"><rect x="1" y="1" width="15.5" height="13.5" fill="#fff" stroke="#444" stroke-width="1.2"/><path d="M1 4 H16.5 M1 9 H16.5" stroke="#444" stroke-width="1.1"/></svg>
<div class="rb" style="left:1151.7px;top:85.6px">Split</div>
<svg class="a" style="left:1130px;top:109px" width="18" height="17" viewBox="0 0 18 17"><rect x="1" y="1" width="15.5" height="14" fill="#fff" stroke="#444" stroke-width="1.2"/><path d="M1 15 L16.5 1" stroke="#444" stroke-width="1.1"/></svg>
<div class="rb" style="left:1151.7px;top:112.3px">Hide</div>
<svg class="a" style="left:1130px;top:136px" width="18" height="16" viewBox="0 0 18 16"><rect x="1" y="1" width="15.5" height="14" fill="#f4f4f4" stroke="#c4c4c4" stroke-width="1.2"/><rect x="1" y="1" width="15.5" height="3" fill="#c8c8c8"/></svg>
<div class="rb dis" style="left:1151.7px;top:138.1px">Unhide</div>
<div class="a" style="left:1207px;top:87px;width:1px;height:63px;background:#e1e1e1"></div>
<svg class="a" style="left:1217px;top:84px" width="19" height="15" viewBox="0 0 19 15"><path d="M1 2 H8 V13 H1Z M10 2 H17 V13 H10Z" fill="none" stroke="#bdbdbd" stroke-width="1.1"/><path d="M3 5 H6 M12 5 H15" stroke="#bdbdbd" stroke-width="1"/></svg>
<div class="rb dis" style="left:1238.7px;top:85.6px">View Side by Side</div>
<svg class="a" style="left:1217px;top:109px" width="19" height="17" viewBox="0 0 19 17"><path d="M1 2 H8 V12 H1Z" fill="none" stroke="#bdbdbd" stroke-width="1.1"/><path d="M3 2 V12" stroke="#bdbdbd" stroke-width="1"/><path d="M14 1 V16 M12 3 L14 1 L16 3 M12 14 L14 16 L16 14" fill="none" stroke="#bdbdbd" stroke-width="1"/></svg>
<div class="rb dis" style="left:1238.7px;top:112.3px">Synchronous Scrolling</div>
<svg class="a" style="left:1217px;top:135px" width="19" height="17" viewBox="0 0 19 17"><path d="M1 6 H8 V16 H1Z M10 6 H17 V16 H10Z" fill="none" stroke="#bdbdbd" stroke-width="1.1"/><path d="M2 2.5 C4 0.5 6 1 7 3" fill="none" stroke="#bdbdbd" stroke-width="1"/></svg>
<div class="rb dis" style="left:1239px;top:138.1px">Reset Window Position</div>
<div class="a" style="left:1378.5px;top:87px;width:1px;height:63px;background:#e1e1e1"></div>
<svg class="a" style="left:1402px;top:83px" width="34" height="32" viewBox="0 0 34 32">
 <rect x="2.5" y="1.5" width="21" height="17" fill="#fff" stroke="#555" stroke-width="1.2"/>
 <rect x="2.5" y="1.5" width="21" height="3" fill="#aaa"/>
 <rect x="9" y="11.5" width="22.5" height="18" fill="#fff" stroke="#555" stroke-width="1.2"/>
 <rect x="9" y="11.5" width="22.5" height="3" fill="#aaa"/>
 <path d="M5 13 C0.5 17 2.5 25 10 24" fill="none" stroke="#3c92d8" stroke-width="1.2"/>
 <path d="M7.5 21 L10.5 24 L7.5 27" fill="none" stroke="#3c92d8" stroke-width="1.2"/>
</svg>
<div class="rb" style="left:1401px;top:119.2px">Switch</div>
<div class="rb" style="left:1389.8px;top:135.6px">Windows</div>
<svg class="a" style="left:1441px;top:140px" width="9" height="6" viewBox="0 0 9 6"><path d="M1 1 L4.5 4.5 L8 1" fill="none" stroke="#444" stroke-width="1.2"/></svg>
<div class="a" style="left:1461.5px;top:81px;width:1px;height:90px;background:#e1e1e1"></div>
<svg class="a" style="left:1478px;top:84px" width="33" height="32" viewBox="0 0 33 32">
 <rect x="1.5" y="1.5" width="28" height="25" fill="#fff" stroke="#444" stroke-width="1.3"/>
 <path d="M1.5 5.5 H29.5" stroke="#444" stroke-width="1.2"/>
 <path d="M4.5 9.5 H6 M8 9.5 H11 M13 9.5 H19 M4.5 13.5 H6 M8 13.5 H14 M4.5 17.5 H6 M8 17.5 H12 M4.5 21.5 H6 M8 21.5 H12" stroke="#555" stroke-width="1.1"/>
 <path d="M16 14 H28 C30 14 30 17 28 17 H26 V28 C26 30 24 30.5 22 30.5 H15 C13 30.5 13 27.5 15 27.5 H18 V16 C18 14.5 17 14 16 14Z" fill="#fff" stroke="#e05a5a" stroke-width="1.2"/>
</svg>
<div class="rb" style="left:1473.8px;top:120.4px">Macros</div>
<svg class="a" style="left:1489px;top:139px" width="9" height="6" viewBox="0 0 9 6"><path d="M1 1 L4.5 4.5 L8 1" fill="none" stroke="#444" stroke-width="1.2"/></svg>
<div class="gl" style="left:1475px">Macros</div>
<div class="a" style="left:1524px;top:81px;width:1px;height:90px;background:#e1e1e1"></div>
<svg class="a" style="left:1890px;top:159px" width="13" height="8" viewBox="0 0 13 8"><path d="M1 1 L6.5 6.5 L12 1" fill="none" stroke="#444" stroke-width="1.2"/></svg>

<!-- ============ FORMULA BAR ============ -->
<div class="a" style="left:3px;top:186px;width:101px;height:21px;background:#fff;border-radius:4px"></div>
<div class="a t12" style="left:6px;top:191.5px;font-size:12.8px;color:#222">K22</div>
<svg class="a" style="left:88px;top:193px" width="11" height="7" viewBox="0 0 11 7"><path d="M1 1 L5.5 5.5 L10 1" fill="none" stroke="#444" stroke-width="1.2"/></svg>
<div class="a" style="left:114px;top:190px;width:2.8px;height:2.8px;border-radius:50%;background:#444"></div>
<div class="a" style="left:114px;top:195.3px;width:2.8px;height:2.8px;border-radius:50%;background:#444"></div>
<div class="a" style="left:114px;top:200.6px;width:2.8px;height:2.8px;border-radius:50%;background:#444"></div>
<div class="a" style="left:125.5px;top:186px;width:86px;height:21px;background:#fff;border-radius:4px"></div>
<svg class="a" style="left:130px;top:189px" width="85" height="16" viewBox="0 0 85 16">
 <path d="M2 2 L13.5 13.5 M13.5 2 L2 13.5" stroke="#a8a8a8" stroke-width="1.2"/>
 <path d="M25 8.5 L29.5 13 L40 2.5" fill="none" stroke="#b4b4b4" stroke-width="1.2"/>
 <path d="M71 6 L74 9 L77 6" fill="none" stroke="#999" stroke-width="1.1"/>
</svg>
<div class="a" style="left:180px;top:187px;font-family:'Liberation Serif',serif;font-style:italic;font-weight:bold;font-size:16px;line-height:1;color:#333;white-space:nowrap">f<span style="font-size:13px">x</span></div>
<div class="a" style="left:216.5px;top:186.4px;width:1693px;height:20.5px;background:#fff;border-radius:4px"></div>
<svg class="a" style="left:1895px;top:192px" width="12" height="8" viewBox="0 0 12 8"><path d="M1 1 L6 6 L11 1" fill="none" stroke="#444" stroke-width="1.2"/></svg>

<!-- ============ COLUMN HEADERS CHROME ============ -->
<svg class="a" style="left:4px;top:215px" width="16" height="18" viewBox="0 0 16 18"><path d="M15 1 V17 H1Z" fill="#dedede"/></svg>
<div class="a" style="left:21px;top:223px;width:1px;height:11px;background:#dedede"></div>
<div class="a" style="left:123px;top:223px;width:1px;height:11px;background:#dedede"></div>
<div class="a" style="left:209px;top:223px;width:1px;height:11px;background:#dedede"></div>
<div class="a" style="left:309px;top:223px;width:1px;height:11px;background:#dedede"></div>
<div class="a" style="left:409px;top:223px;width:1px;height:11px;background:#dedede"></div>
<div class="a" style="left:549px;top:223px;width:1px;height:11px;background:#dedede"></div>
<div class="a" style="left:699px;top:223px;width:1px;height:11px;background:#dedede"></div>
<div class="a" style="left:829px;top:223px;width:1px;height:11px;background:#dedede"></div>
<div class="a" style="left:947px;top:223px;width:1px;height:11px;background:#dedede"></div>
<div class="a" style="left:1061px;top:223px;width:1px;height:11px;background:#dedede"></div>
<div class="a" style="left:1176px;top:223px;width:1px;height:11px;background:#dedede"></div>
<div class="a" style="left:1287px;top:223px;width:1px;height:11px;background:#dedede"></div>
<div class="a" style="left:1422px;top:223px;width:1px;height:11px;background:#dedede"></div>
<div class="a" style="left:1586px;top:223px;width:1px;height:11px;background:#dedede"></div>
<div class="a" style="left:1730px;top:223px;width:1px;height:11px;background:#dedede"></div>
<div class="a" style="left:1893px;top:223px;width:1px;height:11px;background:#dedede"></div>

<!-- vertical scrollbar -->
<div class="a" style="left:1898px;top:213px;width:20px;height:760px;background:#f1f1f1"></div>
<svg class="a" style="left:1903px;top:219px" width="12" height="9" viewBox="0 0 12 9"><path d="M1 8 L6 1.5 L11 8Z" fill="#6a6a6a"/></svg>
<div class="a" style="left:1904.5px;top:233px;width:8.5px;height:142px;border-radius:4.5px;background:#7e7e7e"></div>
<svg class="a" style="left:1903px;top:961px" width="12" height="9" viewBox="0 0 12 9"><path d="M1 1 L6 7.5 L11 1Z" fill="#6a6a6a"/></svg>

<!-- ============ SHEET TABS ============ -->
<div class="a" style="left:0;top:973px;width:1918px;height:32px;background:#f0f0f0"></div>
<svg class="a" style="left:13px;top:982px" width="50" height="12" viewBox="0 0 50 12"><path d="M7 1.5 L3 6 L7 10.5" fill="none" stroke="#b0b0b0" stroke-width="1.2"/><path d="M36 1.5 L40 6 L36 10.5" fill="none" stroke="#b0b0b0" stroke-width="1.2"/></svg>
<div class="a" style="left:105px;top:973.5px;width:77px;height:28px;background:#fff;border-radius:0 0 5px 5px"></div>
<div class="a" style="left:113px;top:980.8px;font-size:13.4px;line-height:1;color:#1f1f1f;white-space:nowrap;-webkit-text-stroke:0.4px #1f1f1f">Raw Data</div>
<div class="a" style="left:113px;top:996.5px;width:61px;height:2.5px;border-radius:1px;background:#107c41"></div>
<div class="a" style="left:186px;top:980px;width:1px;height:20px;background:#dcdcdc"></div>
<svg class="a" style="left:228px;top:983px" width="14" height="13" viewBox="0 0 14 13"><path d="M7 1 V12 M1.5 6.5 H12.5" stroke="#555" stroke-width="1.2"/></svg>
<div class="a" style="left:1152px;top:984px;width:2px;height:2px;border-radius:50%;background:#555"></div>
<div class="a" style="left:1152px;top:988.5px;width:2px;height:2px;border-radius:50%;background:#555"></div>
<div class="a" style="left:1152px;top:993px;width:2px;height:2px;border-radius:50%;background:#555"></div>
<svg class="a" style="left:1173px;top:984px" width="9" height="11" viewBox="0 0 9 11"><path d="M8 1 L1.5 5.5 L8 10Z" fill="#707070"/></svg>
<div class="a" style="left:1186.5px;top:985.5px;width:500px;height:7.5px;border-radius:4px;background:#7a7a7a"></div>
<svg class="a" style="left:1887px;top:984px" width="9" height="11" viewBox="0 0 9 11"><path d="M1 1 L7.5 5.5 L1 10Z" fill="#707070"/></svg>

<!-- ============ STATUS BAR ============ -->
<div class="a" style="left:0;top:1005px;width:1918px;height:23px;background:#f3f3f3"></div>
<div class="a" style="left:5px;top:1013px;font-size:11px;line-height:1;color:#333;white-space:nowrap">Ready</div>
<svg class="a" style="left:53px;top:1010px" width="17" height="15" viewBox="0 0 17 15"><circle cx="7" cy="2.5" r="1.8" fill="none" stroke="#444" stroke-width="1"/><path d="M1.5 5.5 H12.5 M7 5.5 V9 L4 14 M7 9 L9 11" fill="none" stroke="#444" stroke-width="1.1"/><path d="M9.5 11.5 L11.5 13.5 L15.5 8.5" fill="none" stroke="#444" stroke-width="1.1"/></svg>
<div class="a" style="left:72px;top:1013px;font-size:11px;line-height:1;color:#333;white-space:nowrap;letter-spacing:-0.1px">Accessibility: Good to go</div>
<div class="a" style="left:1602px;top:1006.5px;width:41px;height:21.5px;background:#e0e0e0"></div>
<svg class="a" style="left:1615px;top:1009px" width="16" height="16" viewBox="0 0 16 16"><rect x="1.5" y="1.5" width="13" height="13" fill="none" stroke="#333" stroke-width="1.2"/><path d="M5.8 1.5 V14.5 M10.2 1.5 V14.5 M1.5 5.8 H14.5 M1.5 10.2 H14.5" stroke="#333" stroke-width="1.1"/></svg>
<svg class="a" style="left:1655px;top:1009px" width="17" height="16" viewBox="0 0 17 16"><rect x="1" y="1.5" width="14.5" height="13" fill="none" stroke="#444" stroke-width="1.2"/><rect x="4.5" y="4" width="7.5" height="8" fill="none" stroke="#777" stroke-width="1"/></svg>
<svg class="a" style="left:1696px;top:1009px" width="17" height="16" viewBox="0 0 17 16"><path d="M1 1.5 V14.5 H15.5 V1.5" fill="none" stroke="#444" stroke-width="1.2"/><path d="M5 1 V8 H11.5 V1 M8 1 V8" fill="none" stroke="#444" stroke-width="1.1"/></svg>
<div class="a" style="left:1733px;top:1016.5px;width:8px;height:1px;background:#555"></div>
<div class="a" style="left:1745.5px;top:1017px;width:100px;height:1px;background:#555"></div>
<div class="a" style="left:1792.5px;top:1012px;width:6px;height:11px;background:#666"></div>
<svg class="a" style="left:1850px;top:1011px" width="11" height="11" viewBox="0 0 11 11"><path d="M5.5 1 V10 M1 5.5 H10" stroke="#555" stroke-width="1.1"/></svg>
<div class="a" style="left:1873px;top:1012.5px;font-size:11px;line-height:1;color:#333;white-space:nowrap;letter-spacing:-0.3px">100%</div>
<div class="a" style="left:1688px;top:1004px;font-size:20px;line-height:1;color:rgba(128,128,128,0.5);white-space:nowrap">Activate Windows</div>

<!-- selected cell K22 -->
<div class="a" style="left:1176px;top:730px;width:112px;height:25px;border:1.2px solid #217346"></div>
<div class="a" style="left:1285px;top:752px;width:5px;height:5px;background:#217346;border:1px solid #fff"></div>
<div class="a" style="left:20px;top:731px;width:1.5px;height:24px;background:#217346"></div>

<!-- ============ FREEZE PANES DROPDOWN ============ -->
<div class="a" style="left:1075.4px;top:158px;width:339.5px;height:190px;background:#fff;border:1px solid #9a9a9a;border-radius:5px;box-shadow:0 2px 5px rgba(0,0,0,0.18)"></div>
<svg class="a" style="left:1092px;top:174px" width="30" height="27" viewBox="0 0 30 27">
 <rect x="2" y="8" width="26" height="17.5" fill="#fff"/>
 <rect x="2" y="8" width="26" height="6" fill="#5aa3e6"/>
 <rect x="2" y="8" width="8.7" height="17.5" fill="#5aa3e6"/>
 <path d="M2 14 H28 M2 19.8 H28 M10.7 8 V25.5 M19.3 8 V25.5" stroke="#555" stroke-width="0.9"/>
 <rect x="2" y="8" width="26" height="17.5" fill="none" stroke="#555" stroke-width="1"/>
 <circle cx="6.5" cy="6.5" r="5.5" fill="#fff" opacity="0.9"/>
 <path d="M6.5 1.3 V11.7 M2 3.9 L11 9.1 M11 3.9 L2 9.1" stroke="#2b8be0" stroke-width="1.6"/>
</svg>
<svg class="a" style="left:1093px;top:240px" width="32" height="30" viewBox="0 0 32 30">
 <rect x="2.5" y="2.5" width="25" height="19" fill="#fff" stroke="#555" stroke-width="1"/>
 <rect x="2.5" y="2.5" width="25" height="4.5" fill="#5aa3e6"/>
 <path d="M2.5 7 H27.5" stroke="#555" stroke-width="0.9"/>
 <circle cx="24" cy="21.5" r="6" fill="#fff"/>
 <path d="M24 16 V27 M19.2 18.75 L28.8 24.25 M28.8 18.75 L19.2 24.25" stroke="#2b8be0" stroke-width="1.6"/>
</svg>
<svg class="a" style="left:1093px;top:302px" width="32" height="30" viewBox="0 0 32 30">
 <rect x="2.5" y="2.5" width="25" height="19" fill="#fff" stroke="#555" stroke-width="1"/>
 <rect x="2.5" y="2.5" width="6" height="19" fill="#5aa3e6"/>
 <path d="M8.5 2.5 V21.5" stroke="#555" stroke-width="0.9"/>
 <circle cx="24" cy="21.5" r="6" fill="#fff"/>
 <path d="M24 16 V27 M19.2 18.75 L28.8 24.25 M28.8 18.75 L19.2 24.25" stroke="#2b8be0" stroke-width="1.6"/>
</svg>
<div class="pt" style="top:167.5px"><u>F</u>reeze Panes</div>
<div class="pd" style="top:186.2px">Keep rows and columns visible while the rest of</div>
<div class="pd" style="top:203.4px">the worksheet scrolls (based on current selection).</div>
<div class="pt" style="top:229.5px">Freeze Top <u>R</u>ow</div>
<div class="pd" style="top:248.2px">Keep the top row visible while scrolling through</div>
<div class="pd" style="top:265.3px">the rest of the worksheet.</div>
<div class="pt" style="top:291.5px">Freeze First <u>C</u>olumn</div>
<div class="pd" style="top:310px">Keep the first column visible while scrolling</div>
<div class="pd" style="top:327.3px">through the rest of the worksheet.</div>

<!-- red highlight box -->
<div class="a" style="left:1063.5px;top:67.5px;width:361.5px;height:292.5px;border:8.5px solid #ff2a08"></div>

</body></html>
